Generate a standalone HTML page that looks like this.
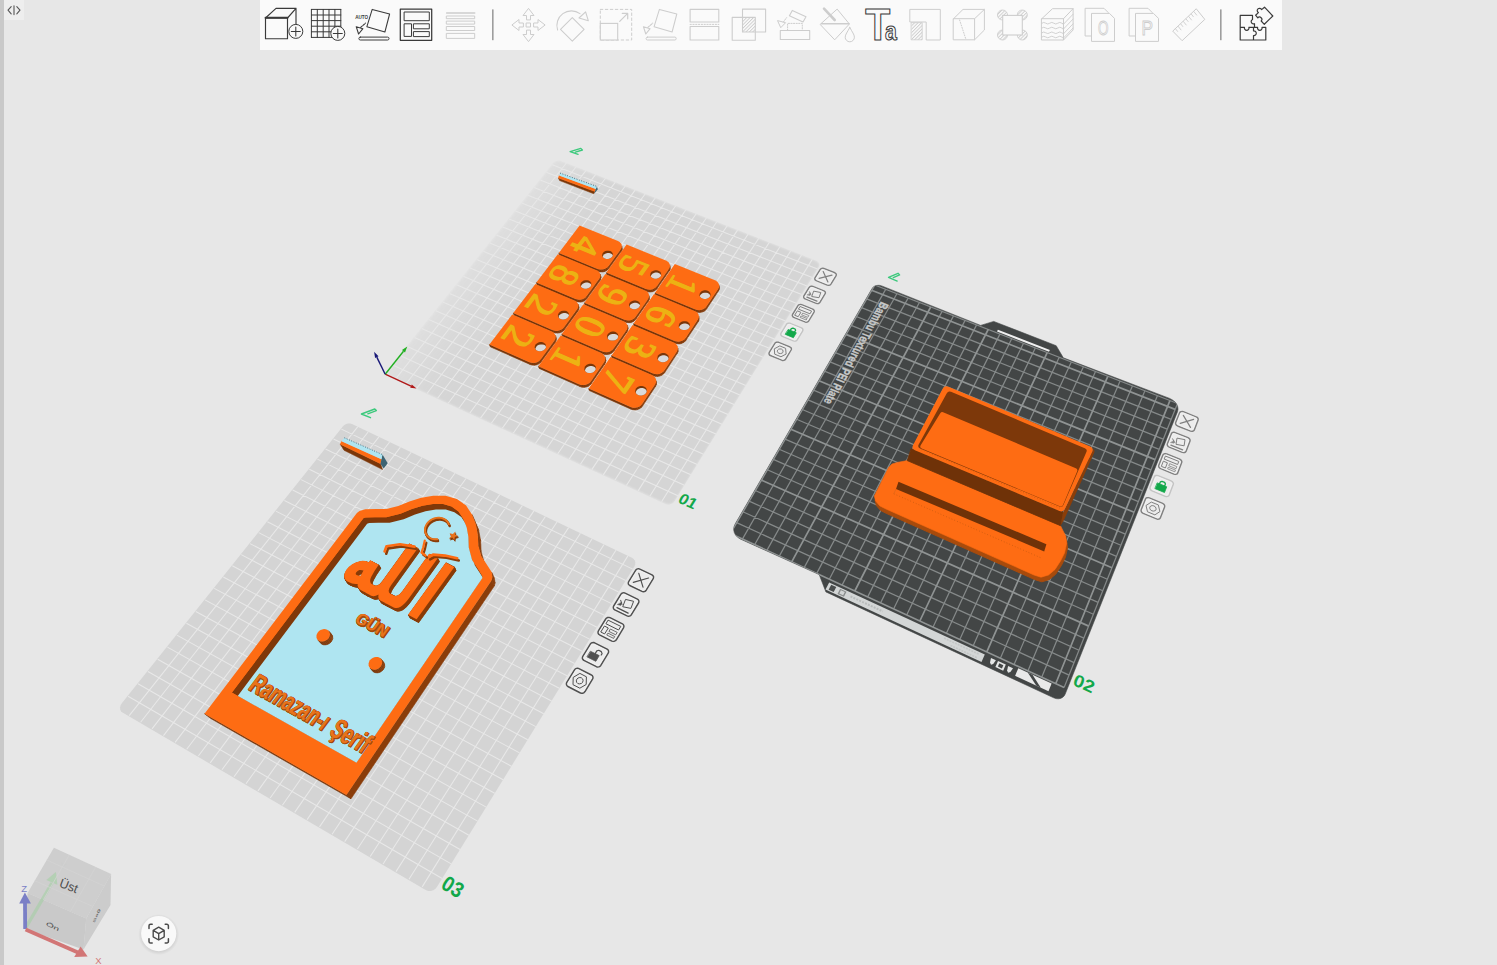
<!DOCTYPE html>
<html><head><meta charset="utf-8"><title>3D</title><style>html,body{margin:0;padding:0;background:#e7e7e7;overflow:hidden}svg{display:block}</style></head><body>
<svg width="1497" height="965" viewBox="0 0 1497 965">
<rect x="0" y="0" width="1497" height="965" fill="#e7e7e7"/>
<defs><linearGradient id="lg1" gradientUnits="userSpaceOnUse" x1="414.5" y1="337.5" x2="462.9" y2="376.1"><stop offset="0" stop-color="#707070"/><stop offset="0.5" stop-color="#c8c8c8"/><stop offset="1" stop-color="#fafafa"/></linearGradient><filter id="bl1" x="-5%" y="-5%" width="110%" height="110%"><feGaussianBlur stdDeviation="1.2"/></filter><mask id="mk1" maskUnits="userSpaceOnUse" x="0" y="0" width="1497" height="965"><polygon points="388.9,369.5 387.9,371.5 387.8,373.5 388.7,375.3 390.4,376.6 665.5,503.6 668.0,504.2 670.6,503.9 673.0,502.8 674.7,501.0 818.6,267.3 819.2,265.5 818.8,263.7 817.6,262.1 815.7,260.9 561.3,161.4 559.2,161.0 557.0,161.2 555.0,162.0 553.5,163.3" fill="url(#lg1)" filter="url(#bl1)"/></mask></defs>
<g mask="url(#mk1)">
<polygon points="388.0,369.7 387.1,371.3 386.8,372.9 387.2,374.5 388.1,375.8 389.5,376.8 665.1,504.1 667.1,504.7 669.3,504.7 671.3,504.1 673.1,503.0 674.4,501.5 818.8,266.9 819.4,265.5 819.3,264.0 818.7,262.6 817.5,261.4 816.0,260.5 561.1,160.9 559.5,160.5 557.7,160.5 556.0,160.9 554.5,161.7 553.3,162.7" fill="#d4d4d4" />
<path d="M395.6,378.9L566.4,163.0M392.6,364.9L677.9,495.7M406.0,383.8L576.1,166.8M400.0,355.6L684.4,485.2M416.5,388.6L585.9,170.6M407.3,346.5L690.8,474.8M427.0,393.5L595.7,174.4M414.5,337.5L697.2,464.4M437.6,398.3L605.5,178.2M421.7,328.5L703.5,454.2M448.2,403.3L615.4,182.1M428.7,319.6L709.7,444.1M458.9,408.2L625.3,186.0M435.8,310.8L715.9,434.1M469.7,413.2L635.3,189.9M442.7,302.1L722.0,424.2M480.5,418.1L645.3,193.8M449.6,293.4L728.0,414.4M491.3,423.2L655.4,197.7M456.5,284.8L734.0,404.6M502.3,428.2L665.5,201.7M463.3,276.3L739.9,395.0M513.2,433.3L675.7,205.7M470.0,267.9L745.8,385.4M524.3,438.4L685.9,209.7M476.7,259.6L751.7,376.0M535.4,443.5L696.2,213.7M483.3,251.3L757.4,366.6M546.5,448.7L706.5,217.7M489.8,243.1L763.1,357.3M557.8,453.8L716.8,221.8M496.3,235.0L768.8,348.1M569.1,459.1L727.2,225.8M502.7,226.9L774.4,339.0M580.4,464.3L737.7,229.9M509.1,218.9L780.0,330.0M591.8,469.6L748.2,234.0M515.4,211.0L785.5,321.0M603.3,474.9L758.8,238.2M521.7,203.1L791.0,312.1M614.8,480.2L769.4,242.3M527.9,195.3L796.4,303.3M626.4,485.5L780.1,246.5M534.1,187.6L801.7,294.6M638.1,490.9L790.8,250.7M540.2,179.9L807.0,286.0M649.8,496.3L801.6,254.9M546.3,172.3L812.3,277.4M661.6,501.8L812.4,259.1M552.3,164.8L817.5,269.0" stroke="#e8e8e8" stroke-width="1.05" fill="none"/>
</g>
<polygon points="122.0,703.0 120.7,705.1 120.1,707.3 120.2,709.4 121.0,711.3 122.5,712.6 426.1,890.2 428.3,891.0 430.8,891.0 433.3,890.3 435.5,888.7 437.2,886.6 634.5,566.3 635.2,564.4 635.3,562.5 634.8,560.6 633.6,559.0 631.9,557.8 352.0,424.0 350.2,423.4 348.1,423.4 346.1,424.0 344.3,425.0 342.8,426.4" fill="#d4d4d4" />
<path d="M129.2,715.6L357.8,426.7M128.1,696.3L442.2,878.5M140.6,722.2L368.3,431.8M138.0,683.8L451.2,863.9M152.0,728.9L378.9,436.9M147.9,671.5L460.1,849.5M163.5,735.6L389.6,442.0M157.7,659.2L468.9,835.2M175.1,742.4L400.4,447.1M167.4,647.1L477.6,821.1M186.7,749.2L411.2,452.3M176.9,635.1L486.2,807.1M198.4,756.0L422.0,457.5M186.4,623.3L494.7,793.3M210.2,762.9L432.9,462.7M195.8,611.5L503.1,779.7M222.0,769.8L443.9,467.9M205.0,599.9L511.4,766.2M234.0,776.8L454.9,473.2M214.2,588.4L519.6,752.9M246.0,783.8L466.0,478.5M223.3,577.0L527.7,739.7M258.0,790.9L477.2,483.8M232.3,565.8L535.8,726.6M270.2,798.0L488.4,489.2M241.2,554.6L543.7,713.7M282.4,805.2L499.7,494.6M250.0,543.6L551.6,701.0M294.7,812.4L511.0,500.0M258.7,532.6L559.3,688.3M307.1,819.6L522.4,505.5M267.4,521.8L567.0,675.8M319.5,826.9L533.9,510.9M275.9,511.1L574.6,663.5M332.1,834.2L545.4,516.5M284.4,500.5L582.2,651.2M344.7,841.6L557.0,522.0M292.7,490.0L589.6,639.1M357.4,849.0L568.6,527.6M301.1,479.6L597.0,627.2M370.2,856.5L580.4,533.2M309.3,469.3L604.3,615.3M383.1,864.0L592.1,538.8M317.4,459.1L611.5,603.6M396.0,871.6L604.0,544.5M325.5,449.0L618.6,592.0M409.0,879.2L615.9,550.2M333.5,439.0L625.7,580.5M422.2,886.9L627.9,555.9M341.4,429.1L632.7,569.1" stroke="#e8e8e8" stroke-width="1.05" fill="none"/>
<polygon points="735.1,524.1 734.0,526.8 733.7,529.7 734.3,532.5 735.6,535.1 737.7,537.3 740.3,539.0 819.2,574.6 825.9,591.9 1053.7,697.8 1056.0,698.6 1058.3,698.8 1060.6,698.4 1062.5,697.4 1064.1,696.0 1065.2,694.1 1177.5,411.7 1178.0,409.2 1177.7,406.7 1176.6,404.1 1174.8,401.8 1172.4,399.9 1169.6,398.4 1063.3,357.8 1056.2,345.7 993.7,321.4 980.6,325.4 881.7,285.9 879.9,285.4 878.0,285.3 876.1,285.6 874.5,286.2 873.1,287.2 872.1,288.5" fill="#434646" stroke="#434646" stroke-width="0.6" stroke-linejoin="round" />
<clipPath id="dkclip"><polygon points="735.1,524.1 734.0,526.8 733.7,529.7 734.3,532.5 735.6,535.1 737.7,537.3 740.3,539.0 819.2,574.6 825.9,591.9 1053.7,697.8 1056.0,698.6 1058.3,698.8 1060.6,698.4 1062.5,697.4 1064.1,696.0 1065.2,694.1 1177.5,411.7 1178.0,409.2 1177.7,406.7 1176.6,404.1 1174.8,401.8 1172.4,399.9 1169.6,398.4 1063.3,357.8 1056.2,345.7 993.7,321.4 980.6,325.4 881.7,285.9 879.9,285.4 878.0,285.3 876.1,285.6 874.5,286.2 873.1,287.2 872.1,288.5"/></clipPath>
<polygon points="997.0,331.5 1049.0,351.8 1049.9,350.0 997.9,329.7" fill="#f0f0f0" />
<g clip-path="url(#dkclip)"><path d="M742.4,539.1L885.7,289.4M736.6,522.6L1069.1,675.1M754.6,544.7L896.9,293.7M742.9,511.8L1074.1,662.6M766.9,550.4L908.1,298.1M749.1,501.1L1079.0,650.3M779.3,556.1L919.4,302.5M755.2,490.5L1083.9,638.1M804.2,567.6L942.1,311.4M767.3,469.7L1093.4,614.2M816.7,573.4L953.5,315.9M773.3,459.4L1098.1,602.4M829.3,579.2L965.1,320.4M779.2,449.2L1102.8,590.7M842.1,585.1L976.6,324.9M785.1,439.1L1107.4,579.2M867.7,596.9L999.9,334.1M796.6,419.3L1116.5,556.4M880.6,602.9L1011.7,338.7M802.3,409.5L1120.9,545.2M893.6,608.9L1023.5,343.3M807.9,399.8L1125.4,534.2M906.7,614.9L1035.3,347.9M813.5,390.2L1129.7,523.2M933.1,627.1L1059.2,357.3M824.5,371.2L1138.4,501.6M946.4,633.3L1071.3,362.0M830.0,361.9L1142.6,490.9M959.8,639.4L1083.4,366.7M835.3,352.7L1146.8,480.4M973.2,645.7L1095.5,371.5M840.7,343.5L1151.0,469.9M1000.4,658.2L1120.1,381.1M851.2,325.4L1159.2,449.4M1014.1,664.5L1132.4,385.9M856.3,316.5L1163.2,439.2M1027.9,670.9L1144.9,390.8M861.5,307.6L1167.2,429.2M1041.7,677.3L1157.4,395.7M866.6,298.9L1171.2,419.3M1064.1,687.6L1177.5,403.5M874.6,285.0L1177.5,403.5" stroke="#858989" stroke-width="1.25" fill="none"/>
<path d="M730.3,533.5L874.6,285.0M730.3,533.5L1064.1,687.6M791.7,561.8L930.7,307.0M761.3,480.0L1088.7,626.1M854.8,591.0L988.2,329.5M790.9,429.2L1111.9,567.7M919.8,621.0L1047.2,352.6M819.0,380.7L1134.1,512.3M986.8,651.9L1107.8,376.3M845.9,334.4L1155.1,459.6M1055.7,683.7L1169.9,400.6M871.6,290.2L1175.1,409.4" stroke="#8f9393" stroke-width="1.7" fill="none"/></g>
<polygon points="829.2,582.5 984.8,654.4 981.5,662.0 825.5,589.6" fill="#d3d6d6" />
<polygon points="831.2,584.7 836.3,587.0 833.7,592.1 828.6,589.7" fill="#4a4d4d" />
<polygon points="840.1,588.8 846.5,591.7 843.9,596.8 837.5,593.9" fill="#8a8d8d" />
<polygon points="840.9,590.3 844.8,592.1 843.1,595.3 839.3,593.5" fill="#d3d6d6" />
<path d="M850.5,596.4L882.8,611.4" stroke="#b9bcbc" stroke-width="2" stroke-dasharray="2 1.2" fill="none"/>
<path d="M944.1,638.1L979.2,654.3M950.5,645.4L977.5,658.0" stroke="#c3c6c6" stroke-width="1.6" stroke-dasharray="2 1" fill="none"/>
<polygon points="991.0,658.0 995.9,660.3 993.2,664.1 991.0,664.8 990.0,662.6" fill="#e4e6e6" />
<polygon points="1008.1,665.9 1013.0,668.2 1010.4,672.0 1008.1,672.8 1007.1,670.5" fill="#e4e6e6" />
<polygon points="998.0,661.0 1005.8,664.6 1003.2,670.8 995.4,667.1" fill="#e4e6e6" />
<polygon points="999.3,663.3 1003.3,665.2 1001.9,668.4 997.9,666.6" fill="#434646" />
<polygon points="1018.3,668.2 1051.6,683.6 1048.5,691.3 1015.1,675.8" fill="#e9e9e9" />
<polygon points="1027.9,672.7 1032.5,674.8 1040.8,687.8 1036.2,685.6" fill="#434646" />
<text transform="matrix(-0.5011,0.8749,-1.1286,-0.4452,880.91,301.33)" font-family="'Liberation Sans',sans-serif" font-size="10.4" font-weight="bold" fill="#c6c8c8" text-anchor="start" textLength="115" lengthAdjust="spacingAndGlyphs" stroke="#c6c8c8" stroke-width="0.3">Bambu Textured PEI Plate</text>
<line x1="385.2" y1="374.2" x2="411.0" y2="386.1" stroke="#b01818" stroke-width="1.4"/>
<polygon points="416.5,388.6 410.2,387.8 411.8,384.4" fill="#b01818" />
<line x1="385.2" y1="374.2" x2="403.5" y2="351.2" stroke="#22b022" stroke-width="1.4"/>
<polygon points="407.3,346.5 405.0,352.4 402.0,350.0" fill="#22b022" />
<line x1="385.2" y1="374.2" x2="376.8" y2="357.1" stroke="#181878" stroke-width="1.4"/>
<polygon points="374.1,351.7 378.5,356.3 375.1,357.9" fill="#181878" />
<polygon points="340.2,444.2 380.5,463.7 382.5,469.6 344.0,450.3" fill="#7a3608" stroke="#7a3608" stroke-width="0.5" stroke-linejoin="round" />
<polygon points="341.5,441.2 381.4,459.2 380.5,463.7 340.2,444.2" fill="#fe6c13" stroke="#fe6c13" stroke-width="0.4" stroke-linejoin="round" />
<polygon points="382.5,454.6 387.7,463.2 383.7,468.6 380.5,463.7 381.4,459.2" fill="#3d6473" />
<polygon points="344.4,437.8 382.5,454.6 381.4,459.2 341.5,441.2" fill="#afe5f1" />
<line x1="344.4" y1="437.8" x2="382.5" y2="454.6" stroke="#35586a" stroke-width="0.9" stroke-dasharray="0.9 1.6"/>
<polygon points="558.4,178.0 594.9,191.6 593.8,193.8 559.6,180.6" fill="#7a3608" stroke="#7a3608" stroke-width="0.5" stroke-linejoin="round" />
<polygon points="559.1,175.5 595.8,188.9 594.9,191.6 558.4,178.0" fill="#fe6c13" stroke="#fe6c13" stroke-width="0.4" stroke-linejoin="round" />
<polygon points="596.8,186.4 597.9,189.3 594.4,193.6 594.9,191.6 595.8,188.9" fill="#3d6473" />
<polygon points="560.1,173.1 596.8,186.4 595.8,188.9 559.1,175.5" fill="#afe5f1" />
<line x1="560.1" y1="173.1" x2="596.8" y2="186.4" stroke="#35586a" stroke-width="0.9" stroke-dasharray="0.9 1.6"/>
<polygon points="559.4,255.3 598.1,271.3 597.6,269.0 558.8,252.9" fill="#783509" stroke="#783509" stroke-width="0.6" stroke-linejoin="round" />
<polygon points="598.1,271.3 599.9,271.9 599.5,269.5 597.6,269.0" fill="#7a3609" stroke="#7a3609" stroke-width="0.6" stroke-linejoin="round" />
<polygon points="599.9,271.9 602.0,272.0 601.5,269.6 599.5,269.5" fill="#7d3709" stroke="#7d3709" stroke-width="0.6" stroke-linejoin="round" />
<polygon points="602.0,272.0 604.0,271.7 603.6,269.3 601.5,269.6" fill="#803809" stroke="#803809" stroke-width="0.6" stroke-linejoin="round" />
<polygon points="604.0,271.7 605.9,271.0 605.5,268.6 603.6,269.3" fill="#823a0a" stroke="#823a0a" stroke-width="0.6" stroke-linejoin="round" />
<polygon points="605.9,271.0 607.5,269.9 607.1,267.6 605.5,268.6" fill="#853b0a" stroke="#853b0a" stroke-width="0.6" stroke-linejoin="round" />
<polygon points="607.5,269.9 608.8,268.6 608.4,266.3 607.1,267.6" fill="#883c0a" stroke="#883c0a" stroke-width="0.6" stroke-linejoin="round" />
<polygon points="608.8,268.6 621.2,251.5 620.8,249.2 608.4,266.3" fill="#8a3d0a" stroke="#8a3d0a" stroke-width="0.6" stroke-linejoin="round" />
<polygon points="621.2,251.5 622.0,250.1 621.6,247.7 620.8,249.2" fill="#8a3d0a" stroke="#8a3d0a" stroke-width="0.6" stroke-linejoin="round" />
<polygon points="622.0,250.1 622.2,248.5 621.8,246.1 621.6,247.7" fill="#8a3d0a" stroke="#8a3d0a" stroke-width="0.6" stroke-linejoin="round" />
<polygon points="558.8,252.9 597.6,269.0 599.5,269.5 601.5,269.6 603.6,269.3 605.5,268.6 607.1,267.6 608.4,266.3 620.8,249.2 621.6,247.7 621.8,246.1 621.6,244.6 620.8,243.2 619.6,242.0 618.0,241.1 579.6,225.5" fill="#fe6c13" />
<polygon points="612.2,256.7 612.8,255.4 612.9,254.1 612.5,252.9 611.6,251.8 610.3,251.1 608.7,250.7 607.0,250.7 605.4,251.1 604.0,251.8 602.9,252.9 602.3,254.1 602.2,255.5 602.6,256.7 603.5,257.8 604.8,258.5 606.4,259.0 608.1,259.0 609.7,258.5 611.1,257.8" fill="#7a3608" />
<clipPath id="h96_182"><polygon points="612.2,256.7 612.8,255.4 612.9,254.1 612.5,252.9 611.6,251.8 610.3,251.1 608.7,250.7 607.0,250.7 605.4,251.1 604.0,251.8 602.9,252.9 602.3,254.1 602.2,255.5 602.6,256.7 603.5,257.8 604.8,258.5 606.4,259.0 608.1,259.0 609.7,258.5 611.1,257.8"/></clipPath>
<polygon points="612.6,259.1 613.2,257.8 613.3,256.5 612.9,255.3 612.0,254.2 610.7,253.4 609.2,253.0 607.5,253.0 605.8,253.4 604.4,254.2 603.4,255.3 602.7,256.5 602.6,257.8 603.1,259.1 604.0,260.1 605.3,260.9 606.8,261.3 608.5,261.3 610.1,260.9 611.6,260.1" fill="#dadada" clip-path="url(#h96_182)"/>
<text transform="matrix(-0.6184,0.8200,-1.0170,-0.4159,574.15,241.13)" font-family="'Liberation Serif',serif" font-size="35" font-weight="normal" fill="#ecb213" text-anchor="middle" stroke="#ecb213" stroke-width="1.15">4</text>
<polygon points="606.8,274.9 646.4,291.3 646.0,289.0 606.3,272.6" fill="#783509" stroke="#783509" stroke-width="0.6" stroke-linejoin="round" />
<polygon points="646.4,291.3 648.3,291.9 647.9,289.5 646.0,289.0" fill="#7a3609" stroke="#7a3609" stroke-width="0.6" stroke-linejoin="round" />
<polygon points="648.3,291.9 650.3,292.0 650.0,289.7 647.9,289.5" fill="#7d3709" stroke="#7d3709" stroke-width="0.6" stroke-linejoin="round" />
<polygon points="650.3,292.0 652.4,291.7 652.1,289.4 650.0,289.7" fill="#803809" stroke="#803809" stroke-width="0.6" stroke-linejoin="round" />
<polygon points="652.4,291.7 654.3,291.0 654.0,288.6 652.1,289.4" fill="#823a0a" stroke="#823a0a" stroke-width="0.6" stroke-linejoin="round" />
<polygon points="654.3,291.0 655.9,289.9 655.6,287.6 654.0,288.6" fill="#853b0a" stroke="#853b0a" stroke-width="0.6" stroke-linejoin="round" />
<polygon points="655.9,289.9 657.1,288.6 656.8,286.2 655.6,287.6" fill="#883c0a" stroke="#883c0a" stroke-width="0.6" stroke-linejoin="round" />
<polygon points="657.1,288.6 669.2,271.1 669.0,268.7 656.8,286.2" fill="#8a3d0a" stroke="#8a3d0a" stroke-width="0.6" stroke-linejoin="round" />
<polygon points="669.2,271.1 670.0,269.6 669.7,267.2 669.0,268.7" fill="#8a3d0a" stroke="#8a3d0a" stroke-width="0.6" stroke-linejoin="round" />
<polygon points="670.0,269.6 670.2,268.0 670.0,265.6 669.7,267.2" fill="#8a3d0a" stroke="#8a3d0a" stroke-width="0.6" stroke-linejoin="round" />
<polygon points="606.3,272.6 646.0,289.0 647.9,289.5 650.0,289.7 652.1,289.4 654.0,288.6 655.6,287.6 656.8,286.2 669.0,268.7 669.7,267.2 670.0,265.6 669.6,264.0 668.8,262.6 667.6,261.4 665.9,260.5 626.6,244.6" fill="#fe6c13" />
<polygon points="660.5,276.4 661.1,275.2 661.1,273.8 660.7,272.5 659.7,271.5 658.4,270.7 656.8,270.3 655.1,270.3 653.5,270.7 652.0,271.5 651.0,272.6 650.4,273.8 650.3,275.2 650.8,276.5 651.7,277.5 653.1,278.3 654.7,278.7 656.4,278.7 658.0,278.3 659.4,277.5" fill="#7a3608" />
<clipPath id="h143_182"><polygon points="660.5,276.4 661.1,275.2 661.1,273.8 660.7,272.5 659.7,271.5 658.4,270.7 656.8,270.3 655.1,270.3 653.5,270.7 652.0,271.5 651.0,272.6 650.4,273.8 650.3,275.2 650.8,276.5 651.7,277.5 653.1,278.3 654.7,278.7 656.4,278.7 658.0,278.3 659.4,277.5"/></clipPath>
<polygon points="660.8,278.8 661.4,277.5 661.4,276.2 661.0,274.9 660.0,273.8 658.7,273.0 657.1,272.6 655.4,272.6 653.8,273.0 652.4,273.8 651.3,274.9 650.7,276.2 650.6,277.5 651.1,278.8 652.0,279.9 653.4,280.7 655.0,281.1 656.7,281.1 658.3,280.7 659.7,279.9" fill="#dadada" clip-path="url(#h143_182)"/>
<text transform="matrix(-0.6045,0.8378,-1.0402,-0.4254,621.56,260.52)" font-family="'Liberation Serif',serif" font-size="35" font-weight="normal" fill="#ecb213" text-anchor="middle" stroke="#ecb213" stroke-width="1.15">5</text>
<polygon points="655.3,295.0 695.8,311.8 695.6,309.5 655.0,292.7" fill="#783509" stroke="#783509" stroke-width="0.6" stroke-linejoin="round" />
<polygon points="695.8,311.8 697.7,312.3 697.5,310.0 695.6,309.5" fill="#7a3609" stroke="#7a3609" stroke-width="0.6" stroke-linejoin="round" />
<polygon points="697.7,312.3 699.8,312.4 699.6,310.2 697.5,310.0" fill="#7d3709" stroke="#7d3709" stroke-width="0.6" stroke-linejoin="round" />
<polygon points="699.8,312.4 701.9,312.1 701.7,309.8 699.6,310.2" fill="#803809" stroke="#803809" stroke-width="0.6" stroke-linejoin="round" />
<polygon points="701.9,312.1 703.8,311.4 703.6,309.1 701.7,309.8" fill="#823a0a" stroke="#823a0a" stroke-width="0.6" stroke-linejoin="round" />
<polygon points="703.8,311.4 705.4,310.3 705.2,308.0 703.6,309.1" fill="#853b0a" stroke="#853b0a" stroke-width="0.6" stroke-linejoin="round" />
<polygon points="705.4,310.3 706.6,308.9 706.4,306.6 705.2,308.0" fill="#883c0a" stroke="#883c0a" stroke-width="0.6" stroke-linejoin="round" />
<polygon points="706.6,308.9 718.4,291.1 718.3,288.8 706.4,306.6" fill="#8a3d0a" stroke="#8a3d0a" stroke-width="0.6" stroke-linejoin="round" />
<polygon points="718.4,291.1 719.1,289.5 719.0,287.2 718.3,288.8" fill="#8a3d0a" stroke="#8a3d0a" stroke-width="0.6" stroke-linejoin="round" />
<polygon points="719.1,289.5 719.3,287.9 719.2,285.6 719.0,287.2" fill="#8a3d0a" stroke="#8a3d0a" stroke-width="0.6" stroke-linejoin="round" />
<polygon points="655.0,292.7 695.6,309.5 697.5,310.0 699.6,310.2 701.7,309.8 703.6,309.1 705.2,308.0 706.4,306.6 718.3,288.8 719.0,287.2 719.2,285.6 718.8,284.0 718.0,282.5 716.6,281.3 715.0,280.3 674.8,264.1" fill="#fe6c13" />
<polygon points="709.9,296.6 710.5,295.3 710.5,294.0 710.0,292.7 709.0,291.6 707.6,290.7 706.0,290.3 704.3,290.3 702.6,290.8 701.2,291.6 700.2,292.7 699.6,294.0 699.5,295.3 700.0,296.6 701.0,297.8 702.4,298.6 704.0,299.0 705.8,299.0 707.4,298.6 708.8,297.8" fill="#7a3608" />
<clipPath id="h189_182"><polygon points="709.9,296.6 710.5,295.3 710.5,294.0 710.0,292.7 709.0,291.6 707.6,290.7 706.0,290.3 704.3,290.3 702.6,290.8 701.2,291.6 700.2,292.7 699.6,294.0 699.5,295.3 700.0,296.6 701.0,297.8 702.4,298.6 704.0,299.0 705.8,299.0 707.4,298.6 708.8,297.8"/></clipPath>
<polygon points="710.0,299.0 710.6,297.7 710.6,296.3 710.1,295.0 709.2,293.9 707.8,293.1 706.2,292.7 704.4,292.7 702.8,293.1 701.4,293.9 700.3,295.0 699.8,296.3 699.7,297.7 700.2,299.0 701.2,300.1 702.6,300.9 704.2,301.3 705.9,301.3 707.6,300.9 709.0,300.1" fill="#dadada" clip-path="url(#h189_182)"/>
<text transform="matrix(-0.5898,0.8563,-1.0642,-0.4352,670.05,280.35)" font-family="'Liberation Serif',serif" font-size="35" font-weight="normal" fill="#ecb213" text-anchor="middle" stroke="#ecb213" stroke-width="1.15">1</text>
<polygon points="537.0,284.9 576.1,301.4 575.6,299.1 536.4,282.5" fill="#783509" stroke="#783509" stroke-width="0.6" stroke-linejoin="round" />
<polygon points="576.1,301.4 578.0,301.9 577.5,299.6 575.6,299.1" fill="#7a3609" stroke="#7a3609" stroke-width="0.6" stroke-linejoin="round" />
<polygon points="578.0,301.9 580.1,302.1 579.6,299.8 577.5,299.6" fill="#7d3709" stroke="#7d3709" stroke-width="0.6" stroke-linejoin="round" />
<polygon points="580.1,302.1 582.1,301.8 581.6,299.5 579.6,299.8" fill="#803809" stroke="#803809" stroke-width="0.6" stroke-linejoin="round" />
<polygon points="582.1,301.8 584.1,301.1 583.6,298.7 581.6,299.5" fill="#823a0a" stroke="#823a0a" stroke-width="0.6" stroke-linejoin="round" />
<polygon points="584.1,301.1 585.7,300.0 585.2,297.7 583.6,298.7" fill="#853b0a" stroke="#853b0a" stroke-width="0.6" stroke-linejoin="round" />
<polygon points="585.7,300.0 587.0,298.6 586.5,296.3 585.2,297.7" fill="#883c0a" stroke="#883c0a" stroke-width="0.6" stroke-linejoin="round" />
<polygon points="587.0,298.6 599.8,281.0 599.4,278.6 586.5,296.3" fill="#8a3d0a" stroke="#8a3d0a" stroke-width="0.6" stroke-linejoin="round" />
<polygon points="599.8,281.0 600.6,279.5 600.2,277.1 599.4,278.6" fill="#8a3d0a" stroke="#8a3d0a" stroke-width="0.6" stroke-linejoin="round" />
<polygon points="600.6,279.5 600.9,277.8 600.5,275.5 600.2,277.1" fill="#8a3d0a" stroke="#8a3d0a" stroke-width="0.6" stroke-linejoin="round" />
<polygon points="600.9,277.8 600.7,276.3 600.2,273.9 600.5,275.5" fill="#8a3d0a" stroke="#8a3d0a" stroke-width="0.6" stroke-linejoin="round" />
<polygon points="536.4,282.5 575.6,299.1 577.5,299.6 579.6,299.8 581.6,299.5 583.6,298.7 585.2,297.7 586.5,296.3 599.4,278.6 600.2,277.1 600.5,275.5 600.2,273.9 599.5,272.5 598.2,271.2 596.6,270.3 557.8,254.3" fill="#fe6c13" />
<polygon points="590.6,286.4 591.2,285.1 591.3,283.8 590.9,282.5 590.0,281.4 588.7,280.6 587.1,280.2 585.4,280.2 583.7,280.6 582.3,281.4 581.2,282.5 580.5,283.8 580.4,285.1 580.8,286.4 581.7,287.5 583.0,288.3 584.6,288.8 586.4,288.8 588.0,288.3 589.5,287.5" fill="#7a3608" />
<clipPath id="h96_147"><polygon points="590.6,286.4 591.2,285.1 591.3,283.8 590.9,282.5 590.0,281.4 588.7,280.6 587.1,280.2 585.4,280.2 583.7,280.6 582.3,281.4 581.2,282.5 580.5,283.8 580.4,285.1 580.8,286.4 581.7,287.5 583.0,288.3 584.6,288.8 586.4,288.8 588.0,288.3 589.5,287.5"/></clipPath>
<polygon points="591.1,288.8 591.7,287.5 591.8,286.1 591.4,284.8 590.5,283.7 589.2,282.9 587.6,282.5 585.9,282.5 584.2,282.9 582.8,283.7 581.7,284.8 581.0,286.1 580.9,287.5 581.3,288.8 582.2,289.9 583.5,290.7 585.1,291.1 586.8,291.1 588.5,290.7 590.0,289.9" fill="#dadada" clip-path="url(#h96_147)"/>
<text transform="matrix(-0.6377,0.8456,-1.0273,-0.4296,552.12,270.35)" font-family="'Liberation Serif',serif" font-size="35" font-weight="normal" fill="#ecb213" text-anchor="middle" stroke="#ecb213" stroke-width="1.15">8</text>
<polygon points="584.9,305.1 624.9,322.0 624.5,319.8 584.4,302.8" fill="#783509" stroke="#783509" stroke-width="0.6" stroke-linejoin="round" />
<polygon points="624.9,322.0 626.9,322.6 626.5,320.3 624.5,319.8" fill="#7a3609" stroke="#7a3609" stroke-width="0.6" stroke-linejoin="round" />
<polygon points="626.9,322.6 629.0,322.7 628.6,320.5 626.5,320.3" fill="#7d3709" stroke="#7d3709" stroke-width="0.6" stroke-linejoin="round" />
<polygon points="629.0,322.7 631.0,322.4 630.7,320.2 628.6,320.5" fill="#803809" stroke="#803809" stroke-width="0.6" stroke-linejoin="round" />
<polygon points="631.0,322.4 633.0,321.7 632.6,319.4 630.7,320.2" fill="#823a0a" stroke="#823a0a" stroke-width="0.6" stroke-linejoin="round" />
<polygon points="633.0,321.7 634.6,320.6 634.3,318.3 632.6,319.4" fill="#853b0a" stroke="#853b0a" stroke-width="0.6" stroke-linejoin="round" />
<polygon points="634.6,320.6 635.9,319.2 635.5,316.9 634.3,318.3" fill="#883c0a" stroke="#883c0a" stroke-width="0.6" stroke-linejoin="round" />
<polygon points="635.9,319.2 648.4,301.2 648.1,298.9 635.5,316.9" fill="#8a3d0a" stroke="#8a3d0a" stroke-width="0.6" stroke-linejoin="round" />
<polygon points="648.4,301.2 649.2,299.6 648.8,297.3 648.1,298.9" fill="#8a3d0a" stroke="#8a3d0a" stroke-width="0.6" stroke-linejoin="round" />
<polygon points="649.2,299.6 649.4,298.0 649.1,295.7 648.8,297.3" fill="#8a3d0a" stroke="#8a3d0a" stroke-width="0.6" stroke-linejoin="round" />
<polygon points="584.4,302.8 624.5,319.8 626.5,320.3 628.6,320.5 630.7,320.2 632.6,319.4 634.3,318.3 635.5,316.9 648.1,298.9 648.8,297.3 649.1,295.7 648.8,294.0 648.0,292.5 646.7,291.3 645.1,290.4 605.4,273.9" fill="#fe6c13" />
<polygon points="639.4,306.8 640.0,305.5 640.1,304.1 639.6,302.8 638.7,301.7 637.3,300.9 635.7,300.5 634.0,300.5 632.3,300.9 630.8,301.7 629.8,302.8 629.1,304.1 629.0,305.5 629.5,306.8 630.4,308.0 631.8,308.8 633.4,309.2 635.1,309.2 636.8,308.8 638.3,308.0" fill="#7a3608" />
<clipPath id="h143_147"><polygon points="639.4,306.8 640.0,305.5 640.1,304.1 639.6,302.8 638.7,301.7 637.3,300.9 635.7,300.5 634.0,300.5 632.3,300.9 630.8,301.7 629.8,302.8 629.1,304.1 629.0,305.5 629.5,306.8 630.4,308.0 631.8,308.8 633.4,309.2 635.1,309.2 636.8,308.8 638.3,308.0"/></clipPath>
<polygon points="639.7,309.1 640.3,307.8 640.4,306.4 640.0,305.1 639.0,304.0 637.7,303.2 636.1,302.8 634.3,302.8 632.7,303.2 631.2,304.0 630.1,305.1 629.5,306.4 629.4,307.8 629.9,309.1 630.8,310.3 632.2,311.1 633.8,311.5 635.5,311.5 637.2,311.1 638.6,310.3" fill="#dadada" clip-path="url(#h143_147)"/>
<text transform="matrix(-0.6237,0.8644,-1.0512,-0.4396,600.01,290.37)" font-family="'Liberation Serif',serif" font-size="35" font-weight="normal" fill="#ecb213" text-anchor="middle" stroke="#ecb213" stroke-width="1.15">9</text>
<polygon points="633.9,325.9 674.9,343.2 674.6,340.9 633.6,323.6" fill="#783509" stroke="#783509" stroke-width="0.6" stroke-linejoin="round" />
<polygon points="674.9,343.2 676.9,343.8 676.6,341.5 674.6,340.9" fill="#7a3609" stroke="#7a3609" stroke-width="0.6" stroke-linejoin="round" />
<polygon points="676.9,343.8 679.0,343.9 678.7,341.7 676.6,341.5" fill="#7d3709" stroke="#7d3709" stroke-width="0.6" stroke-linejoin="round" />
<polygon points="679.0,343.9 681.1,343.6 680.8,341.3 678.7,341.7" fill="#803809" stroke="#803809" stroke-width="0.6" stroke-linejoin="round" />
<polygon points="681.1,343.6 683.0,342.8 682.8,340.6 680.8,341.3" fill="#823a0a" stroke="#823a0a" stroke-width="0.6" stroke-linejoin="round" />
<polygon points="683.0,342.8 684.7,341.7 684.4,339.5 682.8,340.6" fill="#853b0a" stroke="#853b0a" stroke-width="0.6" stroke-linejoin="round" />
<polygon points="684.7,341.7 685.9,340.3 685.7,338.0 684.4,339.5" fill="#883c0a" stroke="#883c0a" stroke-width="0.6" stroke-linejoin="round" />
<polygon points="685.9,340.3 698.1,321.9 697.9,319.6 685.7,338.0" fill="#8a3d0a" stroke="#8a3d0a" stroke-width="0.6" stroke-linejoin="round" />
<polygon points="698.1,321.9 698.8,320.3 698.6,318.0 697.9,319.6" fill="#8a3d0a" stroke="#8a3d0a" stroke-width="0.6" stroke-linejoin="round" />
<polygon points="698.8,320.3 699.1,318.6 698.9,316.3 698.6,318.0" fill="#8a3d0a" stroke="#8a3d0a" stroke-width="0.6" stroke-linejoin="round" />
<polygon points="633.6,323.6 674.6,340.9 676.6,341.5 678.7,341.7 680.8,341.3 682.8,340.6 684.4,339.5 685.7,338.0 697.9,319.6 698.6,318.0 698.9,316.3 698.5,314.6 697.7,313.1 696.3,311.8 694.6,310.9 654.0,294.1" fill="#fe6c13" />
<polygon points="689.3,327.7 689.9,326.4 689.9,324.9 689.4,323.6 688.4,322.5 687.1,321.6 685.4,321.2 683.7,321.2 682.0,321.6 680.5,322.5 679.5,323.6 678.9,324.9 678.8,326.4 679.3,327.7 680.3,328.9 681.7,329.7 683.3,330.1 685.1,330.1 686.8,329.7 688.2,328.9" fill="#7a3608" />
<clipPath id="h189_147"><polygon points="689.3,327.7 689.9,326.4 689.9,324.9 689.4,323.6 688.4,322.5 687.1,321.6 685.4,321.2 683.7,321.2 682.0,321.6 680.5,322.5 679.5,323.6 678.9,324.9 678.8,326.4 679.3,327.7 680.3,328.9 681.7,329.7 683.3,330.1 685.1,330.1 686.8,329.7 688.2,328.9"/></clipPath>
<polygon points="689.5,330.0 690.1,328.6 690.2,327.2 689.7,325.9 688.7,324.7 687.3,323.9 685.6,323.5 683.9,323.5 682.2,323.9 680.8,324.7 679.7,325.9 679.1,327.2 679.1,328.6 679.6,330.0 680.5,331.1 681.9,332.0 683.6,332.4 685.3,332.4 687.0,332.0 688.5,331.1" fill="#dadada" clip-path="url(#h189_147)"/>
<text transform="matrix(-0.6087,0.8837,-1.0758,-0.4499,649.02,310.87)" font-family="'Liberation Serif',serif" font-size="35" font-weight="normal" fill="#ecb213" text-anchor="middle" stroke="#ecb213" stroke-width="1.15">6</text>
<polygon points="514.0,315.3 553.5,332.4 552.9,330.2 513.3,313.0" fill="#783509" stroke="#783509" stroke-width="0.6" stroke-linejoin="round" />
<polygon points="553.5,332.4 555.4,333.0 554.8,330.7 552.9,330.2" fill="#7a3609" stroke="#7a3609" stroke-width="0.6" stroke-linejoin="round" />
<polygon points="555.4,333.0 557.5,333.1 556.9,330.9 554.8,330.7" fill="#7d3709" stroke="#7d3709" stroke-width="0.6" stroke-linejoin="round" />
<polygon points="557.5,333.1 559.6,332.8 559.0,330.6 556.9,330.9" fill="#803809" stroke="#803809" stroke-width="0.6" stroke-linejoin="round" />
<polygon points="559.6,332.8 561.6,332.1 561.0,329.8 559.0,330.6" fill="#823a0a" stroke="#823a0a" stroke-width="0.6" stroke-linejoin="round" />
<polygon points="561.6,332.1 563.3,331.0 562.7,328.7 561.0,329.8" fill="#853b0a" stroke="#853b0a" stroke-width="0.6" stroke-linejoin="round" />
<polygon points="563.3,331.0 564.6,329.6 564.0,327.3 562.7,328.7" fill="#883c0a" stroke="#883c0a" stroke-width="0.6" stroke-linejoin="round" />
<polygon points="564.6,329.6 577.8,311.4 577.3,309.1 564.0,327.3" fill="#8a3d0a" stroke="#8a3d0a" stroke-width="0.6" stroke-linejoin="round" />
<polygon points="577.8,311.4 578.6,309.8 578.1,307.5 577.3,309.1" fill="#8a3d0a" stroke="#8a3d0a" stroke-width="0.6" stroke-linejoin="round" />
<polygon points="578.6,309.8 578.9,308.1 578.4,305.8 578.1,307.5" fill="#8a3d0a" stroke="#8a3d0a" stroke-width="0.6" stroke-linejoin="round" />
<polygon points="578.9,308.1 578.7,306.5 578.2,304.2 578.4,305.8" fill="#8a3d0a" stroke="#8a3d0a" stroke-width="0.6" stroke-linejoin="round" />
<polygon points="513.3,313.0 552.9,330.2 554.8,330.7 556.9,330.9 559.0,330.6 561.0,329.8 562.7,328.7 564.0,327.3 577.3,309.1 578.1,307.5 578.4,305.8 578.2,304.2 577.4,302.7 576.2,301.4 574.6,300.5 535.4,283.9" fill="#fe6c13" />
<polygon points="568.2,317.1 568.9,315.8 569.0,314.4 568.6,313.0 567.7,311.9 566.4,311.1 564.8,310.7 563.1,310.7 561.4,311.1 559.9,311.9 558.8,313.0 558.1,314.4 557.9,315.8 558.3,317.1 559.2,318.2 560.6,319.1 562.2,319.5 563.9,319.5 565.6,319.1 567.1,318.2" fill="#7a3608" />
<clipPath id="h96_111"><polygon points="568.2,317.1 568.9,315.8 569.0,314.4 568.6,313.0 567.7,311.9 566.4,311.1 564.8,310.7 563.1,310.7 561.4,311.1 559.9,311.9 558.8,313.0 558.1,314.4 557.9,315.8 558.3,317.1 559.2,318.2 560.6,319.1 562.2,319.5 563.9,319.5 565.6,319.1 567.1,318.2"/></clipPath>
<polygon points="568.8,319.4 569.5,318.1 569.6,316.7 569.2,315.3 568.3,314.2 567.0,313.4 565.4,313.0 563.6,313.0 561.9,313.4 560.5,314.2 559.3,315.3 558.7,316.7 558.5,318.1 558.9,319.4 559.8,320.5 561.1,321.3 562.8,321.8 564.5,321.8 566.2,321.3 567.7,320.5" fill="#dadada" clip-path="url(#h96_111)"/>
<text transform="matrix(-0.6580,0.8725,-1.0378,-0.4439,529.39,300.48)" font-family="'Liberation Serif',serif" font-size="35" font-weight="normal" fill="#ecb213" text-anchor="middle" stroke="#ecb213" stroke-width="1.15">2</text>
<polygon points="562.4,336.3 602.8,353.8 602.3,351.6 561.8,334.0" fill="#783509" stroke="#783509" stroke-width="0.6" stroke-linejoin="round" />
<polygon points="602.8,353.8 604.8,354.4 604.3,352.1 602.3,351.6" fill="#7a3609" stroke="#7a3609" stroke-width="0.6" stroke-linejoin="round" />
<polygon points="604.8,354.4 606.9,354.5 606.4,352.3 604.3,352.1" fill="#7d3709" stroke="#7d3709" stroke-width="0.6" stroke-linejoin="round" />
<polygon points="606.9,354.5 609.0,354.2 608.6,352.0 606.4,352.3" fill="#803809" stroke="#803809" stroke-width="0.6" stroke-linejoin="round" />
<polygon points="609.0,354.2 611.0,353.4 610.5,351.2 608.6,352.0" fill="#823a0a" stroke="#823a0a" stroke-width="0.6" stroke-linejoin="round" />
<polygon points="611.0,353.4 612.7,352.3 612.2,350.1 610.5,351.2" fill="#853b0a" stroke="#853b0a" stroke-width="0.6" stroke-linejoin="round" />
<polygon points="612.7,352.3 614.0,350.9 613.6,348.6 612.2,350.1" fill="#883c0a" stroke="#883c0a" stroke-width="0.6" stroke-linejoin="round" />
<polygon points="614.0,350.9 626.9,332.3 626.5,330.0 613.6,348.6" fill="#8a3d0a" stroke="#8a3d0a" stroke-width="0.6" stroke-linejoin="round" />
<polygon points="626.9,332.3 627.7,330.6 627.3,328.4 626.5,330.0" fill="#8a3d0a" stroke="#8a3d0a" stroke-width="0.6" stroke-linejoin="round" />
<polygon points="627.7,330.6 628.0,328.9 627.6,326.7 627.3,328.4" fill="#8a3d0a" stroke="#8a3d0a" stroke-width="0.6" stroke-linejoin="round" />
<polygon points="628.0,328.9 627.7,327.3 627.3,325.0 627.6,326.7" fill="#8a3d0a" stroke="#8a3d0a" stroke-width="0.6" stroke-linejoin="round" />
<polygon points="561.8,334.0 602.3,351.6 604.3,352.1 606.4,352.3 608.6,352.0 610.5,351.2 612.2,350.1 613.6,348.6 626.5,330.0 627.3,328.4 627.6,326.7 627.3,325.0 626.5,323.5 625.2,322.2 623.5,321.2 583.4,304.2" fill="#fe6c13" />
<polygon points="617.6,338.2 618.2,336.8 618.3,335.4 617.8,334.0 616.9,332.9 615.5,332.0 613.9,331.6 612.1,331.6 610.4,332.0 609.0,332.9 607.8,334.0 607.2,335.4 607.1,336.8 607.5,338.2 608.5,339.4 609.8,340.2 611.5,340.6 613.2,340.6 615.0,340.2 616.4,339.4" fill="#7a3608" />
<clipPath id="h143_111"><polygon points="617.6,338.2 618.2,336.8 618.3,335.4 617.8,334.0 616.9,332.9 615.5,332.0 613.9,331.6 612.1,331.6 610.4,332.0 609.0,332.9 607.8,334.0 607.2,335.4 607.1,336.8 607.5,338.2 608.5,339.4 609.8,340.2 611.5,340.6 613.2,340.6 615.0,340.2 616.4,339.4"/></clipPath>
<polygon points="618.0,340.4 618.6,339.1 618.7,337.7 618.3,336.3 617.3,335.1 616.0,334.3 614.3,333.9 612.6,333.9 610.9,334.3 609.4,335.1 608.3,336.3 607.6,337.7 607.5,339.1 608.0,340.4 608.9,341.6 610.3,342.5 611.9,342.9 613.7,342.9 615.4,342.5 616.9,341.6" fill="#dadada" clip-path="url(#h143_111)"/>
<text transform="matrix(-0.6437,0.8922,-1.0623,-0.4544,577.78,321.18)" font-family="'Liberation Serif',serif" font-size="35" font-weight="normal" fill="#ecb213" text-anchor="middle" stroke="#ecb213" stroke-width="1.15">0</text>
<polygon points="611.9,357.7 653.3,375.7 653.0,373.5 611.5,355.5" fill="#783509" stroke="#783509" stroke-width="0.6" stroke-linejoin="round" />
<polygon points="653.3,375.7 655.3,376.3 655.0,374.1 653.0,373.5" fill="#7a3609" stroke="#7a3609" stroke-width="0.6" stroke-linejoin="round" />
<polygon points="655.3,376.3 657.5,376.4 657.1,374.2 655.0,374.1" fill="#7d3709" stroke="#7d3709" stroke-width="0.6" stroke-linejoin="round" />
<polygon points="657.5,376.4 659.6,376.1 659.3,373.9 657.1,374.2" fill="#803809" stroke="#803809" stroke-width="0.6" stroke-linejoin="round" />
<polygon points="659.6,376.1 661.6,375.3 661.3,373.1 659.3,373.9" fill="#823a0a" stroke="#823a0a" stroke-width="0.6" stroke-linejoin="round" />
<polygon points="661.6,375.3 663.3,374.1 663.0,371.9 661.3,373.1" fill="#853b0a" stroke="#853b0a" stroke-width="0.6" stroke-linejoin="round" />
<polygon points="663.3,374.1 664.6,372.7 664.3,370.5 663.0,371.9" fill="#883c0a" stroke="#883c0a" stroke-width="0.6" stroke-linejoin="round" />
<polygon points="664.6,372.7 677.1,353.6 676.9,351.4 664.3,370.5" fill="#8a3d0a" stroke="#8a3d0a" stroke-width="0.6" stroke-linejoin="round" />
<polygon points="677.1,353.6 677.9,352.0 677.6,349.7 676.9,351.4" fill="#8a3d0a" stroke="#8a3d0a" stroke-width="0.6" stroke-linejoin="round" />
<polygon points="677.9,352.0 678.1,350.2 677.9,348.0 677.6,349.7" fill="#8a3d0a" stroke="#8a3d0a" stroke-width="0.6" stroke-linejoin="round" />
<polygon points="611.5,355.5 653.0,373.5 655.0,374.1 657.1,374.2 659.3,373.9 661.3,373.1 663.0,371.9 664.3,370.5 676.9,351.4 677.6,349.7 677.9,348.0 677.6,346.3 676.7,344.7 675.4,343.4 673.7,342.4 632.6,325.0" fill="#fe6c13" />
<polygon points="668.1,359.8 668.7,358.4 668.7,356.9 668.2,355.5 667.2,354.4 665.8,353.5 664.2,353.1 662.4,353.1 660.7,353.5 659.2,354.4 658.1,355.5 657.5,356.9 657.4,358.4 657.9,359.8 658.9,361.0 660.3,361.8 662.0,362.3 663.7,362.3 665.5,361.8 666.9,361.0" fill="#7a3608" />
<clipPath id="h189_111"><polygon points="668.1,359.8 668.7,358.4 668.7,356.9 668.2,355.5 667.2,354.4 665.8,353.5 664.2,353.1 662.4,353.1 660.7,353.5 659.2,354.4 658.1,355.5 657.5,356.9 657.4,358.4 657.9,359.8 658.9,361.0 660.3,361.8 662.0,362.3 663.7,362.3 665.5,361.8 666.9,361.0"/></clipPath>
<polygon points="668.3,362.0 668.9,360.6 669.0,359.2 668.5,357.8 667.5,356.6 666.1,355.7 664.5,355.3 662.7,355.3 661.0,355.7 659.5,356.6 658.4,357.8 657.8,359.2 657.7,360.6 658.2,362.0 659.2,363.2 660.6,364.1 662.3,364.5 664.0,364.5 665.8,364.1 667.2,363.2" fill="#dadada" clip-path="url(#h189_111)"/>
<text transform="matrix(-0.6286,0.9125,-1.0876,-0.4652,627.32,342.38)" font-family="'Liberation Serif',serif" font-size="35" font-weight="normal" fill="#ecb213" text-anchor="middle" stroke="#ecb213" stroke-width="1.15">3</text>
<polygon points="490.2,346.8 530.1,364.5 529.4,362.3 489.4,344.5" fill="#783509" stroke="#783509" stroke-width="0.6" stroke-linejoin="round" />
<polygon points="530.1,364.5 532.0,365.1 531.4,362.8 529.4,362.3" fill="#7a3609" stroke="#7a3609" stroke-width="0.6" stroke-linejoin="round" />
<polygon points="532.0,365.1 534.2,365.2 533.5,363.0 531.4,362.8" fill="#7d3709" stroke="#7d3709" stroke-width="0.6" stroke-linejoin="round" />
<polygon points="534.2,365.2 536.3,364.9 535.6,362.7 533.5,363.0" fill="#803809" stroke="#803809" stroke-width="0.6" stroke-linejoin="round" />
<polygon points="536.3,364.9 538.3,364.1 537.7,361.9 535.6,362.7" fill="#823a0a" stroke="#823a0a" stroke-width="0.6" stroke-linejoin="round" />
<polygon points="538.3,364.1 540.1,363.0 539.4,360.8 537.7,361.9" fill="#853b0a" stroke="#853b0a" stroke-width="0.6" stroke-linejoin="round" />
<polygon points="540.1,363.0 541.4,361.5 540.8,359.3 539.4,360.8" fill="#883c0a" stroke="#883c0a" stroke-width="0.6" stroke-linejoin="round" />
<polygon points="541.4,361.5 555.1,342.7 554.5,340.5 540.8,359.3" fill="#8a3d0a" stroke="#8a3d0a" stroke-width="0.6" stroke-linejoin="round" />
<polygon points="555.1,342.7 555.9,341.1 555.3,338.9 554.5,340.5" fill="#8a3d0a" stroke="#8a3d0a" stroke-width="0.6" stroke-linejoin="round" />
<polygon points="555.9,341.1 556.3,339.4 555.7,337.1 555.3,338.9" fill="#8a3d0a" stroke="#8a3d0a" stroke-width="0.6" stroke-linejoin="round" />
<polygon points="556.3,339.4 556.0,337.7 555.5,335.4 555.7,337.1" fill="#8a3d0a" stroke="#8a3d0a" stroke-width="0.6" stroke-linejoin="round" />
<polygon points="489.4,344.5 529.4,362.3 531.4,362.8 533.5,363.0 535.6,362.7 537.7,361.9 539.4,360.8 540.8,359.3 554.5,340.5 555.3,338.9 555.7,337.1 555.5,335.4 554.7,333.9 553.5,332.6 551.8,331.6 512.2,314.5" fill="#fe6c13" />
<polygon points="545.2,348.8 545.9,347.4 546.0,346.0 545.6,344.6 544.7,343.4 543.4,342.6 541.8,342.1 540.0,342.1 538.3,342.6 536.8,343.4 535.6,344.6 534.9,345.9 534.7,347.4 535.1,348.8 536.0,349.9 537.4,350.8 539.0,351.2 540.8,351.2 542.5,350.8 544.0,349.9" fill="#7a3608" />
<clipPath id="h96_76"><polygon points="545.2,348.8 545.9,347.4 546.0,346.0 545.6,344.6 544.7,343.4 543.4,342.6 541.8,342.1 540.0,342.1 538.3,342.6 536.8,343.4 535.6,344.6 534.9,345.9 534.7,347.4 535.1,348.8 536.0,349.9 537.4,350.8 539.0,351.2 540.8,351.2 542.5,350.8 544.0,349.9"/></clipPath>
<polygon points="545.8,351.0 546.5,349.6 546.7,348.2 546.3,346.8 545.4,345.6 544.0,344.8 542.4,344.4 540.6,344.4 538.9,344.8 537.4,345.6 536.3,346.8 535.6,348.2 535.4,349.6 535.8,351.0 536.7,352.2 538.0,353.0 539.7,353.5 541.4,353.5 543.1,353.0 544.7,352.2" fill="#dadada" clip-path="url(#h96_76)"/>
<text transform="matrix(-0.6793,0.9007,-1.0485,-0.4590,505.94,331.59)" font-family="'Liberation Serif',serif" font-size="35" font-weight="normal" fill="#ecb213" text-anchor="middle" stroke="#ecb213" stroke-width="1.15">2</text>
<polygon points="539.1,368.4 580.0,386.6 579.4,384.4 538.4,366.2" fill="#783509" stroke="#783509" stroke-width="0.6" stroke-linejoin="round" />
<polygon points="580.0,386.6 581.9,387.2 581.4,385.0 579.4,384.4" fill="#7a3609" stroke="#7a3609" stroke-width="0.6" stroke-linejoin="round" />
<polygon points="581.9,387.2 584.1,387.3 583.6,385.1 581.4,385.0" fill="#7d3709" stroke="#7d3709" stroke-width="0.6" stroke-linejoin="round" />
<polygon points="584.1,387.3 586.2,387.0 585.7,384.8 583.6,385.1" fill="#803809" stroke="#803809" stroke-width="0.6" stroke-linejoin="round" />
<polygon points="586.2,387.0 588.3,386.2 587.7,384.0 585.7,384.8" fill="#823a0a" stroke="#823a0a" stroke-width="0.6" stroke-linejoin="round" />
<polygon points="588.3,386.2 590.0,385.0 589.5,382.9 587.7,384.0" fill="#853b0a" stroke="#853b0a" stroke-width="0.6" stroke-linejoin="round" />
<polygon points="590.0,385.0 591.4,383.5 590.8,381.4 589.5,382.9" fill="#883c0a" stroke="#883c0a" stroke-width="0.6" stroke-linejoin="round" />
<polygon points="591.4,383.5 604.7,364.3 604.2,362.1 590.8,381.4" fill="#8a3d0a" stroke="#8a3d0a" stroke-width="0.6" stroke-linejoin="round" />
<polygon points="604.7,364.3 605.5,362.7 605.0,360.4 604.2,362.1" fill="#8a3d0a" stroke="#8a3d0a" stroke-width="0.6" stroke-linejoin="round" />
<polygon points="605.5,362.7 605.8,360.9 605.3,358.7 605.0,360.4" fill="#8a3d0a" stroke="#8a3d0a" stroke-width="0.6" stroke-linejoin="round" />
<polygon points="605.8,360.9 605.5,359.2 605.1,356.9 605.3,358.7" fill="#8a3d0a" stroke="#8a3d0a" stroke-width="0.6" stroke-linejoin="round" />
<polygon points="538.4,366.2 579.4,384.4 581.4,385.0 583.6,385.1 585.7,384.8 587.7,384.0 589.5,382.9 590.8,381.4 604.2,362.1 605.0,360.4 605.3,358.7 605.1,356.9 604.3,355.4 603.0,354.0 601.3,353.0 560.8,335.5" fill="#fe6c13" />
<polygon points="595.0,370.6 595.7,369.2 595.8,367.7 595.4,366.3 594.4,365.1 593.1,364.2 591.4,363.8 589.6,363.8 587.9,364.2 586.4,365.1 585.2,366.3 584.5,367.7 584.4,369.2 584.8,370.6 585.8,371.8 587.2,372.7 588.8,373.1 590.6,373.1 592.4,372.7 593.9,371.8" fill="#7a3608" />
<clipPath id="h143_76"><polygon points="595.0,370.6 595.7,369.2 595.8,367.7 595.4,366.3 594.4,365.1 593.1,364.2 591.4,363.8 589.6,363.8 587.9,364.2 586.4,365.1 585.2,366.3 584.5,367.7 584.4,369.2 584.8,370.6 585.8,371.8 587.2,372.7 588.8,373.1 590.6,373.1 592.4,372.7 593.9,371.8"/></clipPath>
<polygon points="595.5,372.8 596.2,371.4 596.3,369.9 595.9,368.5 594.9,367.3 593.5,366.4 591.9,366.0 590.1,366.0 588.4,366.4 586.9,367.3 585.7,368.5 585.1,369.9 584.9,371.4 585.4,372.8 586.3,374.0 587.7,374.9 589.3,375.3 591.1,375.3 592.9,374.9 594.4,374.0" fill="#dadada" clip-path="url(#h143_76)"/>
<text transform="matrix(-0.6648,0.9213,-1.0736,-0.4700,554.83,352.99)" font-family="'Liberation Serif',serif" font-size="35" font-weight="normal" fill="#ecb213" text-anchor="middle" stroke="#ecb213" stroke-width="1.15">1</text>
<polygon points="589.2,390.6 631.0,409.2 630.6,407.1 588.7,388.5" fill="#783509" stroke="#783509" stroke-width="0.6" stroke-linejoin="round" />
<polygon points="631.0,409.2 633.1,409.8 632.7,407.7 630.6,407.1" fill="#7a3609" stroke="#7a3609" stroke-width="0.6" stroke-linejoin="round" />
<polygon points="633.1,409.8 635.2,410.0 634.8,407.8 632.7,407.7" fill="#7d3709" stroke="#7d3709" stroke-width="0.6" stroke-linejoin="round" />
<polygon points="635.2,410.0 637.4,409.6 637.0,407.5 634.8,407.8" fill="#803809" stroke="#803809" stroke-width="0.6" stroke-linejoin="round" />
<polygon points="637.4,409.6 639.4,408.8 639.1,406.7 637.0,407.5" fill="#823a0a" stroke="#823a0a" stroke-width="0.6" stroke-linejoin="round" />
<polygon points="639.4,408.8 641.2,407.6 640.8,405.5 639.1,406.7" fill="#853b0a" stroke="#853b0a" stroke-width="0.6" stroke-linejoin="round" />
<polygon points="641.2,407.6 642.5,406.1 642.1,404.0 640.8,405.5" fill="#883c0a" stroke="#883c0a" stroke-width="0.6" stroke-linejoin="round" />
<polygon points="642.5,406.1 655.5,386.4 655.2,384.3 642.1,404.0" fill="#8a3d0a" stroke="#8a3d0a" stroke-width="0.6" stroke-linejoin="round" />
<polygon points="655.5,386.4 656.3,384.7 656.0,382.6 655.2,384.3" fill="#8a3d0a" stroke="#8a3d0a" stroke-width="0.6" stroke-linejoin="round" />
<polygon points="656.3,384.7 656.5,382.9 656.2,380.8 656.0,382.6" fill="#8a3d0a" stroke="#8a3d0a" stroke-width="0.6" stroke-linejoin="round" />
<polygon points="588.7,388.5 630.6,407.1 632.7,407.7 634.8,407.8 637.0,407.5 639.1,406.7 640.8,405.5 642.1,404.0 655.2,384.3 656.0,382.6 656.2,380.8 655.9,379.0 655.1,377.4 653.7,376.0 652.0,375.0 610.5,357.0" fill="#fe6c13" />
<polygon points="646.1,392.9 646.7,391.5 646.8,390.0 646.3,388.5 645.3,387.3 643.9,386.4 642.2,386.0 640.4,386.0 638.7,386.4 637.2,387.3 636.0,388.5 635.4,390.0 635.3,391.5 635.8,392.9 636.8,394.2 638.2,395.1 639.9,395.5 641.7,395.5 643.4,395.1 645.0,394.2" fill="#7a3608" />
<clipPath id="h189_76"><polygon points="646.1,392.9 646.7,391.5 646.8,390.0 646.3,388.5 645.3,387.3 643.9,386.4 642.2,386.0 640.4,386.0 638.7,386.4 637.2,387.3 636.0,388.5 635.4,390.0 635.3,391.5 635.8,392.9 636.8,394.2 638.2,395.1 639.9,395.5 641.7,395.5 643.4,395.1 645.0,394.2"/></clipPath>
<polygon points="646.4,395.1 647.1,393.7 647.2,392.2 646.7,390.7 645.7,389.5 644.3,388.6 642.6,388.1 640.8,388.1 639.0,388.6 637.5,389.5 636.4,390.7 635.8,392.1 635.7,393.7 636.1,395.1 637.1,396.3 638.6,397.2 640.2,397.7 642.1,397.7 643.8,397.2 645.3,396.3" fill="#dadada" clip-path="url(#h189_76)"/>
<text transform="matrix(-0.6494,0.9427,-1.0996,-0.4814,604.91,374.91)" font-family="'Liberation Serif',serif" font-size="35" font-weight="normal" fill="#ecb213" text-anchor="middle" stroke="#ecb213" stroke-width="1.15">7</text>
<polygon points="351.0,798.8 494.3,586.0 491.5,580.4 346.4,795.0" fill="#8a3d0a" stroke="#8a3d0a" stroke-width="0.6" stroke-linejoin="round" />
<polygon points="494.3,586.0 495.1,583.1 492.4,577.4 491.5,580.4" fill="#8a3d0a" stroke="#8a3d0a" stroke-width="0.6" stroke-linejoin="round" />
<polygon points="495.1,583.1 494.3,577.8 491.6,572.1 492.4,577.4" fill="#8a3d0a" stroke="#8a3d0a" stroke-width="0.6" stroke-linejoin="round" />
<polygon points="484.0,561.8 481.1,551.4 478.3,545.5 481.2,556.0" fill="#8a3d0a" stroke="#8a3d0a" stroke-width="0.6" stroke-linejoin="round" />
<polygon points="481.1,551.4 480.7,540.9 477.8,535.0 478.3,545.5" fill="#8a3d0a" stroke="#8a3d0a" stroke-width="0.6" stroke-linejoin="round" />
<polygon points="480.7,540.9 478.7,530.4 475.9,524.4 477.8,535.0" fill="#8a3d0a" stroke="#8a3d0a" stroke-width="0.6" stroke-linejoin="round" />
<polygon points="478.7,530.4 474.8,520.7 472.0,514.6 475.9,524.4" fill="#8a3d0a" stroke="#8a3d0a" stroke-width="0.6" stroke-linejoin="round" />
<polygon points="210.4,718.3 351.0,798.8 346.4,795.0 204.5,713.7" fill="#783509" stroke="#783509" stroke-width="0.6" stroke-linejoin="round" />
<polygon points="346.4,795.0 491.5,580.4 492.4,577.4 491.6,572.1 486.3,563.7 481.2,556.0 478.3,545.5 477.8,535.0 475.9,524.4 472.0,514.6 466.1,505.6 456.9,499.1 445.6,495.7 433.3,495.8 421.2,497.7 409.4,501.4 398.3,506.0 386.3,509.0 376.2,509.0 365.3,509.2 359.5,511.1 356.9,513.1 204.5,713.7" fill="#fe6c13" />
<clipPath id="plq"><polygon points="363.6,518.1 365.7,517.4 374.8,517.3 386.2,517.2 400.4,513.8 411.9,508.9 422.5,505.7 433.0,504.0 443.0,503.9 451.6,506.5 458.5,511.5 463.3,518.8 466.7,527.3 468.4,536.8 468.8,547.6 472.1,560.0 477.8,568.6 482.3,575.7 482.6,577.7 356.5,762.8 231.9,692.6"/></clipPath>
<g clip-path="url(#plq)">
<polygon points="363.6,518.1 365.7,517.4 374.8,517.3 386.2,517.2 400.4,513.8 411.9,508.9 422.5,505.7 433.0,504.0 443.0,503.9 451.6,506.5 458.5,511.5 463.3,518.8 466.7,527.3 468.4,536.8 468.8,547.6 472.1,560.0 477.8,568.6 482.3,575.7 482.6,577.7 356.5,762.8 231.9,692.6" fill="#7f3809" />
<polygon points="367.1,523.7 369.2,523.0 378.3,522.8 389.6,522.8 403.7,519.3 415.0,514.6 425.5,511.3 435.9,509.6 445.8,509.5 454.4,512.2 461.3,517.1 466.0,524.3 469.4,532.8 471.1,542.2 471.5,553.0 474.8,565.3 480.5,573.9 484.9,580.9 485.1,582.9 360.6,766.6 237.0,696.9" fill="#afe5f1" />
</g>
<polygon points="331.4,641.5 332.3,640.0 329.4,636.6 328.5,638.2" fill="#8a3d0a" stroke="#8a3d0a" stroke-width="0.6" stroke-linejoin="round" />
<polygon points="332.3,640.0 332.7,638.4 329.8,635.0 329.4,636.6" fill="#8a3d0a" stroke="#8a3d0a" stroke-width="0.6" stroke-linejoin="round" />
<polygon points="332.7,638.4 332.7,636.8 329.8,633.4 329.8,635.0" fill="#8a3d0a" stroke="#8a3d0a" stroke-width="0.6" stroke-linejoin="round" />
<polygon points="332.7,636.8 332.2,635.3 329.3,631.9 329.8,633.4" fill="#8a3d0a" stroke="#8a3d0a" stroke-width="0.6" stroke-linejoin="round" />
<polygon points="332.2,635.3 331.3,634.1 328.4,630.7 329.3,631.9" fill="#8a3d0a" stroke="#8a3d0a" stroke-width="0.6" stroke-linejoin="round" />
<polygon points="320.8,643.3 322.0,644.2 319.1,640.9 317.8,639.9" fill="#783509" stroke="#783509" stroke-width="0.6" stroke-linejoin="round" />
<polygon points="322.0,644.2 323.5,644.8 320.6,641.4 319.1,640.9" fill="#7a3609" stroke="#7a3609" stroke-width="0.6" stroke-linejoin="round" />
<polygon points="323.5,644.8 325.2,644.9 322.3,641.6 320.6,641.4" fill="#7d3709" stroke="#7d3709" stroke-width="0.6" stroke-linejoin="round" />
<polygon points="325.2,644.9 327.0,644.6 324.0,641.3 322.3,641.6" fill="#803809" stroke="#803809" stroke-width="0.6" stroke-linejoin="round" />
<polygon points="327.0,644.6 328.7,643.9 325.7,640.6 324.0,641.3" fill="#823a0a" stroke="#823a0a" stroke-width="0.6" stroke-linejoin="round" />
<polygon points="328.7,643.9 330.2,642.9 327.3,639.5 325.7,640.6" fill="#853b0a" stroke="#853b0a" stroke-width="0.6" stroke-linejoin="round" />
<polygon points="330.2,642.9 331.4,641.5 328.5,638.2 327.3,639.5" fill="#883c0a" stroke="#883c0a" stroke-width="0.6" stroke-linejoin="round" />
<polygon points="328.5,638.2 329.4,636.6 329.8,635.0 329.8,633.4 329.3,631.9 328.4,630.7 327.2,629.8 325.7,629.2 324.0,629.1 322.2,629.4 320.5,630.1 319.0,631.1 317.8,632.4 316.9,634.0 316.5,635.6 316.5,637.2 316.9,638.7 317.8,639.9 319.1,640.9 320.6,641.4 322.3,641.6 324.0,641.3 325.7,640.6 327.3,639.5" fill="#fe6c13" />
<polygon points="383.4,669.4 384.3,667.9 381.7,664.6 380.8,666.2" fill="#8a3d0a" stroke="#8a3d0a" stroke-width="0.6" stroke-linejoin="round" />
<polygon points="384.3,667.9 384.7,666.2 382.1,662.9 381.7,664.6" fill="#8a3d0a" stroke="#8a3d0a" stroke-width="0.6" stroke-linejoin="round" />
<polygon points="384.7,666.2 384.6,664.6 382.0,661.3 382.1,662.9" fill="#8a3d0a" stroke="#8a3d0a" stroke-width="0.6" stroke-linejoin="round" />
<polygon points="384.6,664.6 384.1,663.1 381.5,659.8 382.0,661.3" fill="#8a3d0a" stroke="#8a3d0a" stroke-width="0.6" stroke-linejoin="round" />
<polygon points="384.1,663.1 383.2,661.8 380.6,658.5 381.5,659.8" fill="#8a3d0a" stroke="#8a3d0a" stroke-width="0.6" stroke-linejoin="round" />
<polygon points="372.7,671.2 374.0,672.2 371.3,669.0 370.0,668.0" fill="#783509" stroke="#783509" stroke-width="0.6" stroke-linejoin="round" />
<polygon points="374.0,672.2 375.5,672.7 372.9,669.5 371.3,669.0" fill="#7a3609" stroke="#7a3609" stroke-width="0.6" stroke-linejoin="round" />
<polygon points="375.5,672.7 377.2,672.9 374.6,669.7 372.9,669.5" fill="#7d3709" stroke="#7d3709" stroke-width="0.6" stroke-linejoin="round" />
<polygon points="377.2,672.9 379.0,672.6 376.4,669.4 374.6,669.7" fill="#803809" stroke="#803809" stroke-width="0.6" stroke-linejoin="round" />
<polygon points="379.0,672.6 380.7,671.9 378.1,668.7 376.4,669.4" fill="#823a0a" stroke="#823a0a" stroke-width="0.6" stroke-linejoin="round" />
<polygon points="380.7,671.9 382.2,670.8 379.6,667.6 378.1,668.7" fill="#853b0a" stroke="#853b0a" stroke-width="0.6" stroke-linejoin="round" />
<polygon points="382.2,670.8 383.4,669.4 380.8,666.2 379.6,667.6" fill="#883c0a" stroke="#883c0a" stroke-width="0.6" stroke-linejoin="round" />
<polygon points="380.8,666.2 381.7,664.6 382.1,662.9 382.0,661.3 381.5,659.8 380.6,658.5 379.3,657.6 377.8,657.0 376.0,656.9 374.3,657.2 372.6,657.9 371.1,658.9 369.8,660.3 369.0,661.9 368.6,663.5 368.6,665.2 369.1,666.7 370.0,668.0 371.3,669.0 372.9,669.5 374.6,669.7 376.4,669.4 378.1,668.7 379.6,667.6" fill="#fe6c13" />
<text transform="matrix(1.1580,0.6486,-0.9383,1.2528,247.99,689.69) scale(0.719,1)" font-family="'Liberation Sans',sans-serif" font-size="18" font-weight="bold" fill="#a04a0c" text-anchor="start" stroke="#a04a0c" stroke-width="0.5" >Ramazan-ı</text>
<text transform="matrix(1.1586,0.6489,-0.9391,1.2535,247.65,689.39) scale(0.719,1)" font-family="'Liberation Sans',sans-serif" font-size="18" font-weight="bold" fill="#a04a0c" text-anchor="start" stroke="#a04a0c" stroke-width="0.5" >Ramazan-ı</text>
<text transform="matrix(1.1593,0.6493,-0.9399,1.2542,247.31,689.09) scale(0.719,1)" font-family="'Liberation Sans',sans-serif" font-size="18" font-weight="bold" fill="#a04a0c" text-anchor="start" stroke="#a04a0c" stroke-width="0.5" >Ramazan-ı</text>
<text transform="matrix(1.1599,0.6496,-0.9407,1.2548,246.97,688.79) scale(0.719,1)" font-family="'Liberation Sans',sans-serif" font-size="18" font-weight="bold" fill="#e8731c" text-anchor="start" >Ramazan-ı</text>
<text transform="matrix(1.2070,0.6761,-0.9137,1.3039,328.72,734.91) scale(0.719,1)" font-family="'Liberation Sans',sans-serif" font-size="18" font-weight="bold" fill="#a04a0c" text-anchor="start" stroke="#a04a0c" stroke-width="0.5" >Şerif</text>
<text transform="matrix(1.2077,0.6764,-0.9144,1.3046,328.42,734.63) scale(0.719,1)" font-family="'Liberation Sans',sans-serif" font-size="18" font-weight="bold" fill="#a04a0c" text-anchor="start" stroke="#a04a0c" stroke-width="0.5" >Şerif</text>
<text transform="matrix(1.2085,0.6768,-0.9152,1.3054,328.13,734.35) scale(0.719,1)" font-family="'Liberation Sans',sans-serif" font-size="18" font-weight="bold" fill="#a04a0c" text-anchor="start" stroke="#a04a0c" stroke-width="0.5" >Şerif</text>
<text transform="matrix(1.2092,0.6772,-0.9160,1.3061,327.83,734.07) scale(0.719,1)" font-family="'Liberation Sans',sans-serif" font-size="18" font-weight="bold" fill="#e8731c" text-anchor="start" >Şerif</text>
<text transform="matrix(1.1656,0.6156,-0.8517,1.1916,369.72,630.78)" font-family="'Liberation Sans',sans-serif" font-size="11.5" font-weight="bold" fill="#a04a0c" text-anchor="middle" stroke="#a04a0c" stroke-width="0.5" >GÜN</text>
<text transform="matrix(1.1663,0.6159,-0.8524,1.1922,369.47,630.45)" font-family="'Liberation Sans',sans-serif" font-size="11.5" font-weight="bold" fill="#a04a0c" text-anchor="middle" stroke="#a04a0c" stroke-width="0.5" >GÜN</text>
<text transform="matrix(1.1670,0.6162,-0.8531,1.1928,369.21,630.12)" font-family="'Liberation Sans',sans-serif" font-size="11.5" font-weight="bold" fill="#a04a0c" text-anchor="middle" stroke="#a04a0c" stroke-width="0.5" >GÜN</text>
<text transform="matrix(1.1676,0.6165,-0.8538,1.1934,368.96,629.79)" font-family="'Liberation Sans',sans-serif" font-size="11.5" font-weight="bold" fill="#a04a0c" text-anchor="middle" stroke="#a04a0c" stroke-width="0.5" >GÜN</text>
<text transform="matrix(1.1683,0.6168,-0.8545,1.1939,368.70,629.45)" font-family="'Liberation Sans',sans-serif" font-size="11.5" font-weight="bold" fill="#e8731c" text-anchor="middle" >GÜN</text>
<text transform="matrix(1.1543,0.5998,-0.8354,1.1623,380.87,602.77) scale(0.71,1)" font-family="'DejaVu Sans',sans-serif" font-size="59" font-weight="bold" fill="#8a3d0a" text-anchor="middle" stroke="#8a3d0a" stroke-width="0.5" direction="rtl" unicode-bidi="bidi-override">الله</text>
<text transform="matrix(1.1549,0.6000,-0.8359,1.1627,380.66,602.47) scale(0.71,1)" font-family="'DejaVu Sans',sans-serif" font-size="59" font-weight="bold" fill="#8a3d0a" text-anchor="middle" stroke="#8a3d0a" stroke-width="0.5" direction="rtl" unicode-bidi="bidi-override">الله</text>
<text transform="matrix(1.1555,0.6003,-0.8365,1.1632,380.45,602.17) scale(0.71,1)" font-family="'DejaVu Sans',sans-serif" font-size="59" font-weight="bold" fill="#8a3d0a" text-anchor="middle" stroke="#8a3d0a" stroke-width="0.5" direction="rtl" unicode-bidi="bidi-override">الله</text>
<text transform="matrix(1.1560,0.6005,-0.8371,1.1637,380.23,601.88) scale(0.71,1)" font-family="'DejaVu Sans',sans-serif" font-size="59" font-weight="bold" fill="#8a3d0a" text-anchor="middle" stroke="#8a3d0a" stroke-width="0.5" direction="rtl" unicode-bidi="bidi-override">الله</text>
<text transform="matrix(1.1566,0.6008,-0.8376,1.1642,380.02,601.58) scale(0.71,1)" font-family="'DejaVu Sans',sans-serif" font-size="59" font-weight="bold" fill="#8a3d0a" text-anchor="middle" stroke="#8a3d0a" stroke-width="0.5" direction="rtl" unicode-bidi="bidi-override">الله</text>
<text transform="matrix(1.1572,0.6010,-0.8382,1.1646,379.81,601.28) scale(0.71,1)" font-family="'DejaVu Sans',sans-serif" font-size="59" font-weight="bold" fill="#8a3d0a" text-anchor="middle" stroke="#8a3d0a" stroke-width="0.5" direction="rtl" unicode-bidi="bidi-override">الله</text>
<text transform="matrix(1.1577,0.6012,-0.8388,1.1651,379.60,600.98) scale(0.71,1)" font-family="'DejaVu Sans',sans-serif" font-size="59" font-weight="bold" fill="#8a3d0a" text-anchor="middle" stroke="#8a3d0a" stroke-width="0.5" direction="rtl" unicode-bidi="bidi-override">الله</text>
<text transform="matrix(1.1583,0.6015,-0.8393,1.1656,379.39,600.68) scale(0.71,1)" font-family="'DejaVu Sans',sans-serif" font-size="59" font-weight="bold" fill="#8a3d0a" text-anchor="middle" stroke="#8a3d0a" stroke-width="0.5" direction="rtl" unicode-bidi="bidi-override">الله</text>
<text transform="matrix(1.1589,0.6017,-0.8399,1.1661,379.18,600.38) scale(0.71,1)" font-family="'DejaVu Sans',sans-serif" font-size="59" font-weight="bold" fill="#8a3d0a" text-anchor="middle" stroke="#8a3d0a" stroke-width="0.5" direction="rtl" unicode-bidi="bidi-override">الله</text>
<text transform="matrix(1.1594,0.6020,-0.8405,1.1666,378.96,600.08) scale(0.71,1)" font-family="'DejaVu Sans',sans-serif" font-size="59" font-weight="bold" fill="#8a3d0a" text-anchor="middle" stroke="#8a3d0a" stroke-width="0.5" direction="rtl" unicode-bidi="bidi-override">الله</text>
<text transform="matrix(1.1600,0.6022,-0.8410,1.1670,378.75,599.78) scale(0.71,1)" font-family="'DejaVu Sans',sans-serif" font-size="59" font-weight="bold" fill="#8a3d0a" text-anchor="middle" stroke="#8a3d0a" stroke-width="0.5" direction="rtl" unicode-bidi="bidi-override">الله</text>
<text transform="matrix(1.1606,0.6024,-0.8416,1.1675,378.54,599.48) scale(0.71,1)" font-family="'DejaVu Sans',sans-serif" font-size="59" font-weight="bold" fill="#fe6c13" text-anchor="middle" direction="rtl" unicode-bidi="bidi-override">الله</text>
<polyline points="449.8,526.2 449.3,525.1 448.8,524.1 448.1,523.2 447.2,522.3 446.3,521.6 445.3,521.0 444.1,520.4 442.9,520.1 441.7,519.8 440.4,519.6 439.1,519.6 437.7,519.8 436.4,520.0 435.1,520.4 433.8,520.9 432.6,521.5 431.4,522.3 430.3,523.1 429.4,524.0 428.5,525.0 427.7,526.1 427.1,527.2 426.6,528.4 426.3,529.6 426.1,530.8 426.0,532.0 426.1,533.1 426.4,534.3 426.8,535.4 427.3,536.4 428.0,537.4 428.8,538.2 429.7,539.0 430.7,539.7 431.8,540.2 433.0,540.7 434.2,541.0 435.5,541.1 436.9,541.2 438.2,541.1" fill="none" stroke="#8a3d0a" stroke-width="2.2" stroke-linecap="round"/>
<polygon points="456.3,533.5 453.8,536.0 450.6,535.2 452.2,537.8 449.9,540.4 453.4,539.5 455.3,541.9 455.8,538.8 459.2,537.7 456.0,536.6" fill="#8a3d0a" />
<polyline points="449.5,525.6 449.0,524.5 448.4,523.5 447.7,522.5 446.9,521.7 446.0,521.0 444.9,520.3 443.8,519.8 442.6,519.4 441.4,519.1 440.1,519.0 438.7,519.0 437.4,519.1 436.1,519.4 434.7,519.8 433.5,520.3 432.2,520.9 431.1,521.6 430.0,522.5 429.0,523.4 428.2,524.4 427.4,525.5 426.8,526.6 426.3,527.7 425.9,528.9 425.7,530.1 425.7,531.3 425.8,532.5 426.0,533.6 426.4,534.7 426.9,535.8 427.6,536.7 428.4,537.6 429.3,538.4 430.3,539.1 431.4,539.6 432.6,540.0 433.9,540.3 435.2,540.5 436.5,540.6 437.9,540.5" fill="none" stroke="#8a3d0a" stroke-width="2.2" stroke-linecap="round"/>
<polygon points="456.0,532.9 453.5,535.4 450.2,534.5 451.9,537.1 449.6,539.8 453.1,538.9 455.0,541.3 455.5,538.2 458.9,537.0 455.7,536.0" fill="#8a3d0a" />
<polyline points="449.1,524.9 448.7,523.8 448.1,522.8 447.4,521.9 446.6,521.1 445.7,520.3 444.6,519.7 443.5,519.2 442.3,518.8 441.0,518.5 439.7,518.4 438.4,518.4 437.1,518.5 435.7,518.8 434.4,519.1 433.1,519.6 431.9,520.3 430.7,521.0 429.7,521.8 428.7,522.8 427.8,523.8 427.1,524.8 426.4,525.9 425.9,527.1 425.6,528.3 425.4,529.5 425.3,530.7 425.4,531.9 425.7,533.0 426.1,534.1 426.6,535.1 427.3,536.1 428.1,537.0 429.0,537.8 430.0,538.4 431.1,539.0 432.3,539.4 433.6,539.7 434.9,539.9 436.2,539.9 437.6,539.8" fill="none" stroke="#8a3d0a" stroke-width="2.2" stroke-linecap="round"/>
<polygon points="455.6,532.2 453.2,534.7 449.9,533.9 451.5,536.5 449.3,539.1 452.8,538.2 454.6,540.7 455.1,537.5 458.6,536.4 455.4,535.4" fill="#8a3d0a" />
<polyline points="448.8,524.3 448.4,523.2 447.8,522.2 447.1,521.3 446.3,520.4 445.3,519.7 444.3,519.1 443.2,518.5 442.0,518.1 440.7,517.9 439.4,517.7 438.1,517.7 436.7,517.9 435.4,518.1 434.1,518.5 432.8,519.0 431.6,519.6 430.4,520.4 429.3,521.2 428.3,522.1 427.5,523.1 426.7,524.2 426.1,525.3 425.6,526.5 425.2,527.7 425.0,528.9 425.0,530.1 425.1,531.2 425.3,532.4 425.7,533.5 426.2,534.5 426.9,535.5 427.7,536.4 428.6,537.1 429.6,537.8 430.8,538.4 432.0,538.8 433.2,539.1 434.5,539.3 435.9,539.3 437.2,539.2" fill="none" stroke="#e8731c" stroke-width="1.9" stroke-linecap="round"/>
<polygon points="455.3,531.6 452.9,534.1 449.6,533.3 451.2,535.9 449.0,538.5 452.4,537.6 454.3,540.1 454.8,536.9 458.2,535.8 455.1,534.7" fill="#e8731c" />
<polyline points="386.2,553.7 388.1,548.4 401.6,546.4 416.1,548.8" fill="none" stroke="#8a3d0a" stroke-width="2.6" stroke-linecap="round" stroke-linejoin="round"/>
<polyline points="384.6,551.5 386.5,546.2 400.0,544.2 414.5,546.6" fill="none" stroke="#fe6c13" stroke-width="2.6" stroke-linecap="round" stroke-linejoin="round"/>
<polyline points="430.1,559.4 434.6,556.8 446.6,557.8 458.8,560.4" fill="none" stroke="#8a3d0a" stroke-width="2.6" stroke-linecap="round" stroke-linejoin="round"/>
<polyline points="428.5,557.2 433.0,554.6 445.0,555.6 457.2,558.2" fill="none" stroke="#fe6c13" stroke-width="2.6" stroke-linecap="round" stroke-linejoin="round"/>
<polyline points="426.4,542.7 424.8,549.7 423.1,554.7 427.1,557.7" fill="none" stroke="#8a3d0a" stroke-width="2.2" stroke-linecap="round" stroke-linejoin="round"/>
<polyline points="424.8,540.5 423.2,547.5 421.5,552.5 425.5,555.5" fill="none" stroke="#fe6c13" stroke-width="2.2" stroke-linecap="round" stroke-linejoin="round"/>
<polygon points="908.0,465.2 1061.3,530.3 1066.6,540.9 1067.5,547.9 1065.3,557.6 1061.3,565.6 1055.8,574.1 1049.3,579.6 1041.8,581.8 1034.8,579.6 886.8,513.6 880.7,510.5 876.4,505.6 875.1,500.6 889.4,472.0 892.8,468.6 898.1,467.0" fill="#a84b0c" stroke="#a84b0c" stroke-width="1" stroke-linejoin="round" />
<polygon points="907.2,460.6 1060.5,525.7 1065.8,536.3 1066.7,543.3 1064.5,553.0 1060.5,561.0 1055.0,569.5 1048.5,575.0 1041.0,577.2 1034.0,575.0 886.0,509.0 879.9,505.9 875.6,501.0 874.3,496.0 888.6,467.4 892.0,464.0 897.3,462.4" fill="#fe6c13" stroke="#fe6c13" stroke-width="0.6" stroke-linejoin="round" />
<polygon points="898.5,481.7 1046.4,544.2 1044.2,551.4 896.0,488.9" fill="#6f3208" />
<line x1="893.8" y1="493.8" x2="1042" y2="558.3" stroke="#b8530f" stroke-width="0.7" stroke-dasharray="0.8 2.2"/>
<line x1="896" y1="488.9" x2="893.8" y2="493.8" stroke="#d9651a" stroke-width="0.6"/>
<polygon points="911.2,448.6 1063.1,512.5 1060.5,525.7 907.2,460.6" fill="#6f3208" stroke="#6f3208" stroke-width="0.8" stroke-linejoin="round" />
<polygon points="1094.0,448.2 1063.1,512.5 1060.5,525.7 1064.0,520.0 1094.5,452.0" fill="#8a3e0a" />
<path d="M942.8,388.6Q944.7,385.1 948.4,386.7L1090.3,446.6Q1094.0,448.2 1092.3,451.8L1064.8,508.9Q1063.1,512.5 1059.4,510.9L914.9,450.2Q911.2,448.6 913.1,445.1Z" fill="#fe6c13" />
<path d="M946.8,393.2Q948.2,390.6 951.0,391.8L1084.8,448.2Q1087.6,449.4 1086.4,452.1L1063.4,504.9Q1062.2,507.6 1059.4,506.4L920.1,448.4Q917.3,447.2 918.7,444.6Z" fill="#7d380a" />
<path d="M940.1,413.5Q941.4,411.4 943.7,412.4L1075.8,468.3Q1078.1,469.3 1077.1,471.6L1063.0,504.9Q1062.0,507.2 1059.7,506.2L921.7,448.4Q919.4,447.4 920.7,445.3Z" fill="#fe6c13" />
<line x1="921" y1="449.5" x2="1061" y2="508.6" stroke="#c45a10" stroke-width="0.7" stroke-dasharray="0.8 2.2"/>
<polygon points="815.0,277.9 814.8,278.7 814.9,279.5 815.5,280.2 816.3,280.7 827.3,285.1 828.3,285.3 829.4,285.2 830.3,284.8 830.9,284.1 836.1,275.6 836.3,274.8 836.1,274.0 835.6,273.3 834.8,272.8 823.8,268.5 822.8,268.3 821.8,268.4 820.9,268.8 820.3,269.4" fill="#ececec" stroke="#808080" stroke-width="1.45" stroke-linejoin="round"/>
<polygon points="816.4,278.1 816.2,278.8 816.5,279.4 817.2,279.9 827.6,284.0 828.4,284.1 829.3,283.9 829.8,283.4 834.7,275.4 834.8,274.7 834.5,274.1 833.9,273.6 823.6,269.5 822.7,269.4 821.9,269.6 821.3,270.1" fill="none" stroke="#f3f3f3" stroke-width="0.7" stroke-linejoin="round"/>
<polyline points="819.1,278.4 832.0,275.1" fill="none" stroke="#808080" stroke-width="1.2" stroke-linejoin="round" stroke-linecap="round"/>
<polyline points="823.2,271.6 827.9,281.9" fill="none" stroke="#808080" stroke-width="1.2" stroke-linejoin="round" stroke-linecap="round"/>
<polygon points="803.9,296.0 803.7,296.8 803.8,297.6 804.3,298.4 805.2,298.9 816.3,303.3 817.3,303.6 818.3,303.5 819.2,303.0 819.9,302.4 825.1,293.7 825.4,292.9 825.2,292.0 824.7,291.3 823.9,290.8 812.8,286.4 811.8,286.2 810.8,286.3 809.9,286.7 809.2,287.4" fill="#ececec" stroke="#808080" stroke-width="1.45" stroke-linejoin="round"/>
<polygon points="805.3,296.2 805.1,296.9 805.4,297.6 806.1,298.1 816.5,302.2 817.4,302.4 818.2,302.2 818.8,301.6 823.8,293.5 823.9,292.8 823.6,292.1 822.9,291.6 812.6,287.5 811.7,287.4 810.9,287.6 810.3,288.1" fill="none" stroke="#f3f3f3" stroke-width="0.7" stroke-linejoin="round"/>
<polyline points="806.9,297.2 816.9,301.2" fill="none" stroke="#808080" stroke-width="1.3" stroke-linejoin="round" stroke-linecap="round"/>
<polygon points="812.1,296.6 819.0,297.7 820.8,292.5 814.0,291.2" fill="none" stroke="#808080" stroke-width="1.0" stroke-linejoin="round" stroke-linecap="round"/>
<polyline points="809.5,291.8 811.0,295.0" fill="none" stroke="#808080" stroke-width="1.0" stroke-linejoin="round" stroke-linecap="round"/>
<polygon points="807.3,295.0 810.0,295.5 810.4,293.4" fill="#808080" stroke="#808080" stroke-width="0.5" stroke-linejoin="round" stroke-linecap="round"/>
<polygon points="792.6,314.5 792.3,315.3 792.5,316.1 793.0,316.9 793.8,317.4 805.0,321.9 806.0,322.2 807.1,322.1 808.0,321.6 808.7,321.0 814.0,312.1 814.3,311.3 814.1,310.4 813.6,309.7 812.7,309.2 801.6,304.7 800.6,304.5 799.5,304.6 798.6,305.0 798.0,305.6" fill="#ececec" stroke="#808080" stroke-width="1.45" stroke-linejoin="round"/>
<polygon points="794.0,314.7 793.8,315.4 794.1,316.1 794.8,316.6 805.3,320.8 806.1,321.0 807.0,320.7 807.6,320.2 812.6,311.9 812.8,311.2 812.5,310.5 811.8,310.0 801.4,305.8 800.5,305.6 799.6,305.9 799.1,306.4" fill="none" stroke="#f3f3f3" stroke-width="0.7" stroke-linejoin="round"/>
<polygon points="798.8,309.3 810.0,313.8 811.6,311.1 800.4,306.6" fill="none" stroke="#808080" stroke-width="1.0" stroke-linejoin="round" stroke-linecap="round"/>
<polygon points="795.0,315.4 798.2,316.7 800.9,312.3 797.7,311.0" fill="none" stroke="#808080" stroke-width="1.0" stroke-linejoin="round" stroke-linecap="round"/>
<polygon points="802.0,315.0 807.8,317.3 808.9,315.5 803.1,313.2" fill="none" stroke="#808080" stroke-width="0.8" stroke-linejoin="round" stroke-linecap="round"/>
<polygon points="800.4,317.6 806.2,320.0 807.1,318.5 801.2,316.2" fill="none" stroke="#808080" stroke-width="0.8" stroke-linejoin="round" stroke-linecap="round"/>
<polygon points="781.0,333.3 780.8,334.1 780.9,335.0 781.4,335.7 782.3,336.3 793.5,340.9 794.6,341.1 795.6,341.0 796.6,340.6 797.2,339.9 802.7,330.9 802.9,330.0 802.8,329.2 802.3,328.4 801.4,327.9 790.2,323.3 789.2,323.1 788.1,323.2 787.2,323.6 786.5,324.3" fill="#ececec" stroke="#c4c4c4" stroke-width="1.45" stroke-linejoin="round"/>
<polygon points="782.4,333.5 782.3,334.2 782.5,334.9 783.2,335.4 793.8,339.8 794.7,339.9 795.5,339.7 796.1,339.1 801.3,330.6 801.4,329.9 801.2,329.2 800.5,328.7 789.9,324.4 789.1,324.3 788.2,324.5 787.6,325.1" fill="none" stroke="#f3f3f3" stroke-width="0.7" stroke-linejoin="round"/>
<polygon points="785.5,334.4 793.4,337.7 796.3,332.8 788.5,329.6" fill="#12a84a" stroke="#12a84a" stroke-width="0.8" stroke-linejoin="round" stroke-linecap="round"/>
<polyline points="790.3,330.3 791.3,328.6 792.9,328.1 795.1,329.0 795.6,330.3 794.5,332.0" fill="none" stroke="#12a84a" stroke-width="1.3" stroke-linejoin="round" stroke-linecap="round"/>
<polygon points="769.3,352.4 769.0,353.3 769.1,354.2 769.6,355.0 770.5,355.5 781.8,360.2 782.9,360.5 783.9,360.4 784.9,359.9 785.6,359.2 791.1,350.0 791.4,349.2 791.3,348.3 790.7,347.5 789.9,347.0 778.6,342.3 777.5,342.1 776.5,342.2 775.5,342.6 774.9,343.3" fill="#ececec" stroke="#808080" stroke-width="1.45" stroke-linejoin="round"/>
<polygon points="770.7,352.7 770.5,353.4 770.8,354.1 771.5,354.6 782.1,359.1 783.0,359.2 783.9,359.0 784.5,358.4 789.7,349.8 789.9,349.0 789.6,348.3 788.9,347.8 778.3,343.4 777.4,343.3 776.5,343.5 775.9,344.1" fill="none" stroke="#f3f3f3" stroke-width="0.7" stroke-linejoin="round"/>
<polygon points="786.1,353.7 785.6,348.3 779.8,345.9 774.3,348.8 774.7,354.2 780.6,356.6" fill="none" stroke="#808080" stroke-width="1.0" stroke-linejoin="round" stroke-linecap="round"/>
<polygon points="782.8,352.3 783.1,351.1 782.6,349.9 781.5,349.1 780.0,348.9 778.6,349.2 777.6,350.1 777.3,351.3 777.8,352.5 778.9,353.3 780.4,353.6 781.8,353.2" fill="none" stroke="#808080" stroke-width="1.0" stroke-linejoin="round" stroke-linecap="round"/>
<polygon points="1175.7,422.6 1175.6,423.6 1175.9,424.5 1176.7,425.4 1177.7,426.0 1190.6,431.1 1191.8,431.3 1192.9,431.2 1193.8,430.7 1194.3,430.0 1198.1,420.0 1198.2,419.1 1197.9,418.2 1197.2,417.3 1196.1,416.8 1183.3,411.7 1182.2,411.5 1181.1,411.6 1180.2,412.0 1179.6,412.8" fill="#ececec" stroke="#808080" stroke-width="1.45" stroke-linejoin="round"/>
<polygon points="1177.3,422.9 1177.2,423.7 1177.7,424.5 1178.5,425.0 1190.6,429.8 1191.6,430.0 1192.5,429.7 1193.0,429.1 1196.6,419.8 1196.6,419.0 1196.2,418.2 1195.3,417.7 1183.3,412.9 1182.3,412.8 1181.4,413.0 1180.9,413.6" fill="none" stroke="#f3f3f3" stroke-width="0.7" stroke-linejoin="round"/>
<polyline points="1180.2,423.3 1193.6,419.4" fill="none" stroke="#808080" stroke-width="1.2" stroke-linejoin="round" stroke-linecap="round"/>
<polyline points="1183.3,415.4 1190.5,427.4" fill="none" stroke="#808080" stroke-width="1.2" stroke-linejoin="round" stroke-linecap="round"/>
<polygon points="1167.4,443.8 1167.2,444.7 1167.6,445.7 1168.3,446.5 1169.3,447.1 1182.3,452.4 1183.5,452.6 1184.6,452.5 1185.5,452.0 1186.1,451.3 1190.0,441.1 1190.1,440.2 1189.8,439.2 1189.0,438.3 1188.0,437.7 1175.1,432.6 1173.9,432.3 1172.8,432.4 1171.9,432.9 1171.4,433.7" fill="#ececec" stroke="#808080" stroke-width="1.45" stroke-linejoin="round"/>
<polygon points="1168.9,444.0 1168.9,444.8 1169.3,445.6 1170.2,446.2 1182.4,451.1 1183.4,451.2 1184.2,451.0 1184.8,450.4 1188.5,440.8 1188.5,440.0 1188.0,439.2 1187.2,438.7 1175.0,433.9 1174.0,433.7 1173.2,433.9 1172.7,434.5" fill="none" stroke="#f3f3f3" stroke-width="0.7" stroke-linejoin="round"/>
<polyline points="1170.9,445.2 1182.6,449.8" fill="none" stroke="#808080" stroke-width="1.3" stroke-linejoin="round" stroke-linecap="round"/>
<polygon points="1176.4,444.4 1184.1,445.8 1185.0,439.7 1177.4,438.2" fill="none" stroke="#808080" stroke-width="1.0" stroke-linejoin="round" stroke-linecap="round"/>
<polyline points="1172.6,438.8 1174.8,442.6" fill="none" stroke="#808080" stroke-width="1.0" stroke-linejoin="round" stroke-linecap="round"/>
<polygon points="1170.8,442.6 1173.9,443.2 1173.9,440.8" fill="#808080" stroke="#808080" stroke-width="0.5" stroke-linejoin="round" stroke-linecap="round"/>
<polygon points="1158.8,465.3 1158.7,466.3 1159.0,467.3 1159.8,468.1 1160.8,468.7 1173.9,474.1 1175.1,474.4 1176.2,474.2 1177.2,473.8 1177.7,473.0 1181.7,462.6 1181.8,461.6 1181.5,460.7 1180.7,459.8 1179.7,459.2 1166.7,453.9 1165.5,453.6 1164.4,453.8 1163.5,454.2 1162.9,455.0" fill="#ececec" stroke="#808080" stroke-width="1.45" stroke-linejoin="round"/>
<polygon points="1160.4,465.6 1160.3,466.4 1160.8,467.2 1161.6,467.8 1174.0,472.8 1175.0,473.0 1175.9,472.7 1176.4,472.1 1180.2,462.3 1180.2,461.5 1179.7,460.7 1178.9,460.1 1166.6,455.2 1165.6,455.0 1164.7,455.3 1164.2,455.9" fill="none" stroke="#f3f3f3" stroke-width="0.7" stroke-linejoin="round"/>
<polygon points="1164.5,459.2 1177.6,464.5 1178.8,461.4 1165.8,456.2" fill="none" stroke="#808080" stroke-width="1.0" stroke-linejoin="round" stroke-linecap="round"/>
<polygon points="1161.7,466.5 1165.4,468.0 1167.4,462.8 1163.7,461.3" fill="none" stroke="#808080" stroke-width="1.0" stroke-linejoin="round" stroke-linecap="round"/>
<polygon points="1169.2,465.9 1176.0,468.7 1176.8,466.6 1170.0,463.8" fill="none" stroke="#808080" stroke-width="0.8" stroke-linejoin="round" stroke-linecap="round"/>
<polygon points="1168.0,469.0 1174.8,471.8 1175.5,470.1 1168.6,467.4" fill="none" stroke="#808080" stroke-width="0.8" stroke-linejoin="round" stroke-linecap="round"/>
<polygon points="1150.1,487.3 1150.0,488.3 1150.3,489.3 1151.0,490.2 1152.1,490.8 1165.3,496.3 1166.5,496.6 1167.7,496.4 1168.6,495.9 1169.2,495.1 1173.2,484.5 1173.4,483.6 1173.0,482.6 1172.3,481.7 1171.2,481.0 1158.1,475.7 1156.9,475.4 1155.8,475.5 1154.8,476.0 1154.3,476.8" fill="#ececec" stroke="#c4c4c4" stroke-width="1.45" stroke-linejoin="round"/>
<polygon points="1151.7,487.6 1151.6,488.4 1152.1,489.2 1152.9,489.8 1165.4,494.9 1166.4,495.1 1167.3,494.9 1167.8,494.2 1171.7,484.3 1171.7,483.4 1171.2,482.6 1170.4,482.0 1158.0,477.0 1157.0,476.8 1156.1,477.1 1155.6,477.7" fill="none" stroke="#f3f3f3" stroke-width="0.7" stroke-linejoin="round"/>
<polygon points="1155.2,488.7 1164.5,492.5 1166.7,486.8 1157.5,483.0" fill="#12a84a" stroke="#12a84a" stroke-width="0.8" stroke-linejoin="round" stroke-linecap="round"/>
<polyline points="1159.6,483.8 1160.4,481.8 1162.0,481.3 1164.6,482.4 1165.4,483.9 1164.6,485.9" fill="none" stroke="#12a84a" stroke-width="1.3" stroke-linejoin="round" stroke-linecap="round"/>
<polygon points="1141.2,509.8 1141.1,510.8 1141.4,511.8 1142.1,512.7 1143.2,513.4 1156.6,518.9 1157.8,519.2 1158.9,519.1 1159.8,518.6 1160.4,517.8 1164.6,507.0 1164.7,506.0 1164.4,504.9 1163.6,504.0 1162.6,503.4 1149.3,497.9 1148.1,497.6 1147.0,497.7 1146.0,498.2 1145.5,499.0" fill="#ececec" stroke="#808080" stroke-width="1.45" stroke-linejoin="round"/>
<polygon points="1142.8,510.0 1142.7,510.9 1143.2,511.7 1144.1,512.3 1156.6,517.6 1157.6,517.8 1158.5,517.5 1159.1,516.8 1163.0,506.7 1163.0,505.8 1162.6,505.0 1161.7,504.4 1149.2,499.2 1148.2,499.0 1147.3,499.3 1146.8,500.0" fill="none" stroke="#f3f3f3" stroke-width="0.7" stroke-linejoin="round"/>
<polygon points="1159.8,511.2 1158.3,504.9 1151.3,502.1 1146.0,505.5 1147.5,511.8 1154.5,514.7" fill="none" stroke="#808080" stroke-width="1.0" stroke-linejoin="round" stroke-linecap="round"/>
<polygon points="1156.0,509.6 1156.0,508.2 1155.3,506.8 1153.9,505.9 1152.2,505.6 1150.7,506.0 1149.8,507.1 1149.8,508.5 1150.5,509.9 1151.9,510.8 1153.6,511.1 1155.1,510.7" fill="none" stroke="#808080" stroke-width="1.0" stroke-linejoin="round" stroke-linecap="round"/>
<polygon points="628.7,581.6 628.3,582.7 628.3,583.8 628.9,584.8 629.8,585.5 642.0,591.4 643.2,591.7 644.4,591.6 645.5,591.0 646.2,590.2 653.2,578.7 653.5,577.6 653.5,576.5 652.9,575.6 652.0,574.9 639.8,569.1 638.7,568.8 637.5,568.9 636.4,569.4 635.6,570.3" fill="#ececec" stroke="#505050" stroke-width="1.45" stroke-linejoin="round"/>
<polygon points="630.2,581.9 629.9,582.9 630.2,583.7 630.9,584.4 642.4,589.9 643.4,590.1 644.4,589.9 645.1,589.2 651.6,578.4 651.9,577.5 651.6,576.6 650.9,576.0 639.4,570.5 638.5,570.3 637.5,570.6 636.8,571.2" fill="none" stroke="#f3f3f3" stroke-width="0.7" stroke-linejoin="round"/>
<polyline points="633.3,582.4 648.6,578.0" fill="none" stroke="#505050" stroke-width="1.2" stroke-linejoin="round" stroke-linecap="round"/>
<polyline points="638.8,573.3 643.0,587.1" fill="none" stroke="#505050" stroke-width="1.2" stroke-linejoin="round" stroke-linecap="round"/>
<polygon points="613.7,606.0 613.3,607.1 613.4,608.2 613.9,609.2 614.8,609.9 627.1,615.9 628.3,616.3 629.5,616.1 630.6,615.6 631.4,614.7 638.5,603.0 638.9,601.9 638.8,600.8 638.3,599.8 637.4,599.1 625.1,593.1 623.9,592.8 622.7,592.9 621.6,593.5 620.8,594.3" fill="#ececec" stroke="#505050" stroke-width="1.45" stroke-linejoin="round"/>
<polygon points="615.3,606.3 615.0,607.2 615.3,608.1 616.0,608.8 627.6,614.5 628.6,614.7 629.6,614.4 630.3,613.7 636.9,602.7 637.2,601.7 636.9,600.8 636.2,600.2 624.7,594.6 623.7,594.4 622.7,594.7 622.0,595.4" fill="none" stroke="#f3f3f3" stroke-width="0.7" stroke-linejoin="round"/>
<polyline points="617.0,607.6 628.1,613.1" fill="none" stroke="#505050" stroke-width="1.3" stroke-linejoin="round" stroke-linecap="round"/>
<polygon points="623.1,606.8 630.9,608.4 633.6,601.3 625.9,599.5" fill="none" stroke="#505050" stroke-width="1.0" stroke-linejoin="round" stroke-linecap="round"/>
<polyline points="620.7,600.3 622.0,604.7" fill="none" stroke="#505050" stroke-width="1.0" stroke-linejoin="round" stroke-linecap="round"/>
<polygon points="617.7,604.6 620.8,605.4 621.6,602.5" fill="#505050" stroke="#505050" stroke-width="0.5" stroke-linejoin="round" stroke-linecap="round"/>
<polygon points="598.4,630.9 598.0,632.0 598.1,633.1 598.6,634.1 599.5,634.8 611.9,641.1 613.1,641.4 614.4,641.2 615.5,640.7 616.3,639.8 623.5,627.8 623.9,626.7 623.8,625.5 623.3,624.5 622.4,623.8 610.0,617.7 608.9,617.4 607.7,617.5 606.5,618.1 605.7,619.0" fill="#ececec" stroke="#505050" stroke-width="1.45" stroke-linejoin="round"/>
<polygon points="600.0,631.2 599.7,632.1 600.0,633.1 600.7,633.7 612.4,639.5 613.4,639.8 614.4,639.5 615.1,638.7 621.9,627.5 622.2,626.5 622.0,625.6 621.2,624.9 609.6,619.2 608.6,619.0 607.6,619.3 606.9,620.0" fill="none" stroke="#f3f3f3" stroke-width="0.7" stroke-linejoin="round"/>
<polygon points="606.3,623.9 618.6,630.0 620.8,626.4 608.4,620.3" fill="none" stroke="#505050" stroke-width="1.0" stroke-linejoin="round" stroke-linecap="round"/>
<polygon points="601.1,632.2 604.6,633.9 608.3,628.0 604.8,626.2" fill="none" stroke="#505050" stroke-width="1.0" stroke-linejoin="round" stroke-linecap="round"/>
<polygon points="609.3,631.6 615.7,634.8 617.2,632.4 610.7,629.2" fill="none" stroke="#505050" stroke-width="0.8" stroke-linejoin="round" stroke-linecap="round"/>
<polygon points="607.1,635.2 613.6,638.4 614.7,636.5 608.3,633.3" fill="none" stroke="#505050" stroke-width="0.8" stroke-linejoin="round" stroke-linecap="round"/>
<polygon points="582.8,656.3 582.4,657.4 582.4,658.6 583.0,659.6 583.9,660.4 596.4,666.7 597.6,667.1 598.8,666.9 600.0,666.3 600.8,665.4 608.2,653.2 608.6,652.0 608.5,650.9 608.0,649.8 607.1,649.1 594.6,642.8 593.5,642.5 592.2,642.7 591.1,643.2 590.3,644.1" fill="#ececec" stroke="#505050" stroke-width="1.45" stroke-linejoin="round"/>
<polygon points="584.4,656.6 584.1,657.6 584.4,658.5 585.1,659.2 596.9,665.2 597.9,665.4 598.9,665.1 599.7,664.3 606.6,652.8 606.9,651.9 606.6,650.9 605.9,650.3 594.2,644.4 593.2,644.2 592.2,644.5 591.4,645.2" fill="none" stroke="#f3f3f3" stroke-width="0.7" stroke-linejoin="round"/>
<polygon points="587.3,657.0 595.8,661.3 599.2,655.6 590.7,651.4" fill="#505050" stroke="#505050" stroke-width="0.8" stroke-linejoin="round" stroke-linecap="round"/>
<polyline points="595.2,653.6 596.8,650.9 598.8,650.3 601.3,651.6 602.1,653.6 601.2,655.0" fill="none" stroke="#505050" stroke-width="1.2" stroke-linejoin="round" stroke-linecap="round"/>
<polygon points="566.8,682.3 566.4,683.5 566.5,684.7 567.0,685.7 567.9,686.5 580.5,693.0 581.7,693.3 583.0,693.2 584.1,692.6 585.0,691.6 592.5,679.1 593.0,678.0 592.9,676.8 592.4,675.7 591.4,675.0 578.9,668.6 577.7,668.2 576.5,668.4 575.3,668.9 574.5,669.9" fill="#ececec" stroke="#505050" stroke-width="1.45" stroke-linejoin="round"/>
<polygon points="568.5,682.6 568.1,683.6 568.4,684.6 569.1,685.3 581.0,691.4 582.0,691.6 583.0,691.3 583.8,690.5 590.9,678.8 591.2,677.8 591.0,676.8 590.2,676.1 578.4,670.1 577.4,669.9 576.4,670.2 575.6,670.9" fill="none" stroke="#f3f3f3" stroke-width="0.7" stroke-linejoin="round"/>
<polygon points="586.2,684.1 586.4,676.8 579.9,673.4 573.2,677.4 573.0,684.7 579.5,688.0" fill="none" stroke="#505050" stroke-width="1.0" stroke-linejoin="round" stroke-linecap="round"/>
<polygon points="582.6,682.2 583.1,680.6 582.7,679.0 581.4,677.8 579.8,677.5 578.1,678.0 576.8,679.2 576.3,680.9 576.7,682.4 577.9,683.6 579.6,683.9 581.3,683.4" fill="none" stroke="#505050" stroke-width="1.0" stroke-linejoin="round" stroke-linecap="round"/>
<text transform="matrix(1.1916,0.5482,-0.6499,1.0664,685.20,505.69)" font-family="'Liberation Sans',sans-serif" font-size="12.5" font-weight="bold" fill="#12a84a" text-anchor="middle" >01</text>
<text transform="matrix(1.4229,0.6549,-0.4949,1.2651,1081.89,689.09)" font-family="'Liberation Sans',sans-serif" font-size="12.5" font-weight="bold" fill="#12a84a" text-anchor="middle" >02</text>
<text transform="matrix(1.3293,0.7744,-0.9057,1.4861,449.07,893.14)" font-family="'Liberation Sans',sans-serif" font-size="12.5" font-weight="bold" fill="#12a84a" text-anchor="middle" >03</text>
<polyline points="578.1,154.4 570.1,151.7 580.8,148.4 582.4,150.0 575.4,152.2" fill="none" stroke="#3cc97c" stroke-width="1.35" stroke-linejoin="round" stroke-linecap="round"/>
<polyline points="897.2,281.1 888.5,277.4 898.0,273.3 899.6,274.9 893.3,277.6" fill="none" stroke="#3cc97c" stroke-width="1.35" stroke-linejoin="round" stroke-linecap="round"/>
<polyline points="370.5,417.7 361.4,414.0 374.8,409.0 376.4,410.6 367.8,413.8" fill="none" stroke="#3cc97c" stroke-width="1.35" stroke-linejoin="round" stroke-linecap="round"/>
<rect x="260" y="0" width="1022" height="50" fill="#fafafa"/>
<path d="M265.5 18H287.5V38.7H265.5ZM265.5 18L276 8.3H296V26M287.5 18L296 8.3" fill="none" stroke="#3a3a3a" stroke-width="1.15" stroke-linejoin="round" stroke-linecap="round"/><path d="M265.5 17.8H287.5" fill="none" stroke="#3a3a3a" stroke-width="1.9" stroke-linejoin="round" stroke-linecap="round"/>
<circle cx="295.8" cy="31.4" r="7" fill="#fafafa" stroke="#3a3a3a" stroke-width="1.0"/><path d="M291.3 31.4H300.3M295.8 26.9V35.9" fill="none" stroke="#3a3a3a" stroke-width="1.05" stroke-linejoin="round" stroke-linecap="round"/>
<path d="M311.4 9.4V37.4M317.3 9.4V37.4M323.2 9.4V37.4M329.0 9.4V37.4M334.9 9.4V37.4M340.8 9.4V37.4M311.4 9.4H340.8M311.4 15.0H340.8M311.4 20.6H340.8M311.4 26.2H340.8M311.4 31.8H340.8M311.4 37.4H340.8" fill="none" stroke="#3a3a3a" stroke-width="1.0" stroke-linejoin="round" stroke-linecap="round"/>
<circle cx="337.8" cy="33.4" r="7" fill="#fafafa" stroke="#3a3a3a" stroke-width="1.0"/><path d="M333.3 33.4H342.3M337.8 28.9V37.9" fill="none" stroke="#3a3a3a" stroke-width="1.05" stroke-linejoin="round" stroke-linecap="round"/>
<path d="M372.2 9.4L389.6 14L384.9 32L366.9 26.7Z" fill="none" stroke="#3a3a3a" stroke-width="1.05" stroke-linejoin="round" stroke-linecap="round"/>
<path d="M356.2 26.7L362.9 28.7L358.6 34Z" fill="none" stroke="#3a3a3a" stroke-width="1.1" stroke-linejoin="round" stroke-linecap="round"/>
<path d="M360.6 27.4L365.5 23.2" fill="none" stroke="#3a3a3a" stroke-width="1.1" stroke-linejoin="round" stroke-linecap="round" stroke-dasharray="2 1.2"/>
<rect x="358.9" y="37.1" width="30.1" height="2.9" rx="1.4" fill="none" stroke="#3a3a3a" stroke-width="1.0" stroke-linejoin="round" stroke-linecap="round"/>
<text x="355.2" y="19.2" font-family="'Liberation Sans',sans-serif" font-weight="bold" font-size="5.3" fill="#3a3a3a" textLength="13" lengthAdjust="spacingAndGlyphs">AUTO</text>
<rect x="400.3" y="9.1" width="31.4" height="31.2" fill="none" stroke="#3a3a3a" stroke-width="1.25" stroke-linejoin="round" stroke-linecap="round"/><rect x="404.5" y="12" width="24.8" height="8.7" fill="none" stroke="#3a3a3a" stroke-width="1.0" stroke-linejoin="round" stroke-linecap="round"/><rect x="404.5" y="23.8" width="7" height="12.6" fill="none" stroke="#3a3a3a" stroke-width="1.0" stroke-linejoin="round" stroke-linecap="round"/><rect x="413.8" y="23.8" width="15.5" height="5" fill="none" stroke="#3a3a3a" stroke-width="1.0" stroke-linejoin="round" stroke-linecap="round"/><rect x="413.8" y="31.6" width="15.5" height="5" fill="none" stroke="#3a3a3a" stroke-width="1.0" stroke-linejoin="round" stroke-linecap="round"/>
<path d="M446.7 13H474.7" fill="none" stroke="#cdcdcd" stroke-width="1.6" stroke-linejoin="round" stroke-linecap="round"/><rect x="446.7" y="16" width="28" height="2.7" fill="none" stroke="#cdcdcd" stroke-width="1" stroke-linejoin="round" stroke-linecap="round"/><rect x="446.7" y="21.1" width="28" height="3" fill="none" stroke="#cdcdcd" stroke-width="1" stroke-linejoin="round" stroke-linecap="round"/><rect x="446.7" y="26.5" width="28" height="4" fill="none" stroke="#cdcdcd" stroke-width="1" stroke-linejoin="round" stroke-linecap="round"/><rect x="446.7" y="33.4" width="28" height="5" fill="none" stroke="#cdcdcd" stroke-width="1" stroke-linejoin="round" stroke-linecap="round"/>
<rect x="492" y="9.4" width="1.6" height="30.8" fill="#9e9e9e"/><rect x="1220" y="9.4" width="1.6" height="30.8" fill="#9e9e9e"/>
<path d="M534.0 23.0L538.0 23.0L538.0 19.5L545.1 25.0L538.0 30.5L538.0 27.0L534.0 27.0ZM530.5 30.5L530.5 34.5L534.0 34.5L528.5 41.6L523.0 34.5L526.5 34.5L526.5 30.5ZM523.0 27.0L519.0 27.0L519.0 30.5L511.9 25.0L519.0 19.5L519.0 23.0L523.0 23.0ZM526.5 19.5L526.5 15.5L523.0 15.5L528.5 8.4L534.0 15.5L530.5 15.5L530.5 19.5Z" fill="none" stroke="#cdcdcd" stroke-width="1.0" stroke-linejoin="round" stroke-linecap="round"/><rect x="526.5" y="23" width="4" height="4" fill="none" stroke="#cdcdcd" stroke-width="1.0" stroke-linejoin="round" stroke-linecap="round"/>
<path d="M572.3 17.6L584.1 29.4L572.3 41.2L560.5 29.4Z" fill="none" stroke="#cdcdcd" stroke-width="1.1" stroke-linejoin="round" stroke-linecap="round"/><path d="M557.6 30A14.6 14.6 0 0 1 580 13.6" fill="none" stroke="#cdcdcd" stroke-width="1.1" stroke-linejoin="round" stroke-linecap="round"/><path d="M585.6 11.8L588.3 20.7L579 18Z" fill="none" stroke="#cdcdcd" stroke-width="1.1" stroke-linejoin="round" stroke-linecap="round"/>
<rect x="600.3" y="9.4" width="31.4" height="30.6" fill="none" stroke="#cdcdcd" stroke-width="1.0" stroke-linejoin="round" stroke-linecap="round" stroke-dasharray="2.5 2.5"/><rect x="600.3" y="23.4" width="17.4" height="16.6" fill="#fafafa" stroke="#cdcdcd" stroke-width="1.1"/><path d="M619.7 21.4L627.7 13.4M622.3 13.4H627.7V18.8" fill="none" stroke="#cdcdcd" stroke-width="1.2" stroke-linejoin="round" stroke-linecap="round"/>
<path d="M659.4 9.4L676.8 14L672.0999999999999 32L654.0999999999999 26.7Z" fill="none" stroke="#cdcdcd" stroke-width="1.05" stroke-linejoin="round" stroke-linecap="round"/>
<path d="M643.4 26.7L650.0999999999999 28.7L645.8 34Z" fill="none" stroke="#cdcdcd" stroke-width="1.1" stroke-linejoin="round" stroke-linecap="round"/>
<path d="M647.8 27.4L652.7 23.2" fill="none" stroke="#cdcdcd" stroke-width="1.1" stroke-linejoin="round" stroke-linecap="round" stroke-dasharray="2 1.2"/>
<rect x="646.0999999999999" y="37.1" width="30.1" height="2.9" rx="1.4" fill="none" stroke="#cdcdcd" stroke-width="1.0" stroke-linejoin="round" stroke-linecap="round"/>
<rect x="690.1" y="9.4" width="28.7" height="12.6" fill="none" stroke="#cdcdcd" stroke-width="1.1" stroke-linejoin="round" stroke-linecap="round"/><rect x="690.1" y="26.5" width="28.7" height="13.5" fill="none" stroke="#cdcdcd" stroke-width="1.1" stroke-linejoin="round" stroke-linecap="round"/><path d="M690.1 24.4H718.8" fill="none" stroke="#cdcdcd" stroke-width="1.0" stroke-linejoin="round" stroke-linecap="round" stroke-dasharray="1.2 1.6"/>
<defs><pattern id="hatch" width="2.4" height="2.4" patternUnits="userSpaceOnUse" patternTransform="rotate(-45)"><rect width="2.4" height="0.9" fill="#cdcdcd"/></pattern></defs>
<rect x="742.5" y="17.4" width="12.8" height="14.6" fill="url(#hatch)"/><rect x="732.2" y="17.4" width="23.1" height="22.9" fill="none" stroke="#cdcdcd" stroke-width="1.1" stroke-linejoin="round" stroke-linecap="round"/><rect x="742.5" y="9.1" width="23.1" height="22.9" fill="none" stroke="#cdcdcd" stroke-width="1.1" stroke-linejoin="round" stroke-linecap="round"/>
<rect x="780.3" y="30.5" width="29.4" height="9" fill="none" stroke="#cdcdcd" stroke-width="1.1" stroke-linejoin="round" stroke-linecap="round"/><path d="M787.6 30.5V23.4H802.3V30.5" fill="none" stroke="#cdcdcd" stroke-width="1.0" stroke-linejoin="round" stroke-linecap="round" stroke-dasharray="1.2 1.4"/><path d="M792.3 10.4L806 16.7L803 22L789.4 15.8Z" fill="none" stroke="#cdcdcd" stroke-width="1.1" stroke-linejoin="round" stroke-linecap="round"/><path d="M777.9 20.7L785.6 22.7L781 27.4Z" fill="none" stroke="#cdcdcd" stroke-width="1.0" stroke-linejoin="round" stroke-linecap="round"/><path d="M783.4 22L786.6 17.6" fill="none" stroke="#cdcdcd" stroke-width="1.0" stroke-linejoin="round" stroke-linecap="round" stroke-dasharray="1.5 1.2"/>
<path d="M837.4 9.4L849.4 24L834.7 39.8L820.4 24.7Z" fill="none" stroke="#cdcdcd" stroke-width="1.0" stroke-linejoin="round" stroke-linecap="round"/><path d="M821.5 23.8H849" fill="none" stroke="#cdcdcd" stroke-width="1.4" stroke-linejoin="round" stroke-linecap="round"/><path d="M824 8.7L834.7 20" fill="none" stroke="#cdcdcd" stroke-width="2.6" stroke-linejoin="round" stroke-linecap="round"/><path d="M849.8 27.4C847.5 32 845.2 34.5 845.2 37.2A4.6 4.6 0 0 0 854.4 37.2C854.4 34.5 852.1 32 849.8 27.4Z" fill="none" stroke="#cdcdcd" stroke-width="1.0" stroke-linejoin="round" stroke-linecap="round"/>
<text x="865.2" y="39.7" font-family="'Liberation Sans',sans-serif" font-weight="bold" font-size="43.6" fill="#fafafa" stroke="#3a3a3a" stroke-width="1.1" textLength="25" lengthAdjust="spacingAndGlyphs">T</text>
<text x="884.9" y="39.7" font-family="'Liberation Sans',sans-serif" font-weight="bold" font-size="25.4" fill="#fafafa" stroke="#3a3a3a" stroke-width="1.1" textLength="11.8" lengthAdjust="spacingAndGlyphs">a</text>
<rect x="911.5" y="22.7" width="10.7" height="17.1" fill="url(#hatch)"/><path d="M910.2 9.4H940.3V40H926.2V22H910.2Z" fill="none" stroke="#cdcdcd" stroke-width="1.0" stroke-linejoin="round" stroke-linecap="round"/><rect x="911.5" y="22.7" width="10.7" height="17.1" fill="none" stroke="#cdcdcd" stroke-width="0.8" stroke-linejoin="round" stroke-linecap="round"/>
<path d="M953.6 18.7H974.6V39.8H953.6ZM953.6 18.7L963 9.4H984.4V30L974.6 39.8M974.6 18.7L984.4 9.4" fill="none" stroke="#cdcdcd" stroke-width="1.0" stroke-linejoin="round" stroke-linecap="round"/><path d="M959.6 20L965.7 38.7" fill="none" stroke="#cdcdcd" stroke-width="1.0" stroke-linejoin="round" stroke-linecap="round" stroke-dasharray="1 1.6"/>
<circle cx="1002.5" cy="15" r="5" fill="url(#hatch)" stroke="#cdcdcd" stroke-width="0.9"/>
<circle cx="1022.3" cy="15" r="5" fill="url(#hatch)" stroke="#cdcdcd" stroke-width="0.9"/>
<circle cx="1002.5" cy="35" r="5" fill="url(#hatch)" stroke="#cdcdcd" stroke-width="0.9"/>
<circle cx="1022.3" cy="35" r="5" fill="url(#hatch)" stroke="#cdcdcd" stroke-width="0.9"/>
<rect x="1002.7" y="15.4" width="19.6" height="19.6" fill="#fafafa" stroke="#cdcdcd" stroke-width="1.1"/>
<path d="M1041.8 18.7H1063.5V40H1041.8ZM1041.8 18.7L1052.5 8.7H1073.1V30L1063.5 40M1063.5 18.7L1073.1 8.7" fill="none" stroke="#cdcdcd" stroke-width="1.0" stroke-linejoin="round" stroke-linecap="round"/><path d="M1041.8 23.2q2-1.6 4 0t4 0t4 0t4 0t4 0t1.7 0M1041.8 28q2-1.6 4 0t4 0t4 0t4 0t4 0t1.7 0M1041.8 32.8q2-1.6 4 0t4 0t4 0t4 0t4 0t1.7 0M1041.8 37q2-1.6 4 0t4 0t4 0t4 0t4 0t1.7 0M1063.5 24.2L1073.1 14.2M1063.5 29L1073.1 19M1063.5 33.8L1073.1 23.799999999999997M1063.5 38L1073.1 28" fill="none" stroke="#cdcdcd" stroke-width="0.9" stroke-linejoin="round" stroke-linecap="round"/>
<path d="M1085.5 8.3H1104L1108.2 12.5V36H1085.5Z" fill="none" stroke="#cdcdcd" stroke-width="1.0" stroke-linejoin="round" stroke-linecap="round"/>
<path d="M1091.5 13.4H1109.5L1114.5 18.4V41.4H1091.5Z" fill="#fafafa" stroke="#cdcdcd" stroke-width="1.0" stroke-linejoin="round"/>
<text x="1103.2" y="35.4" text-anchor="middle" font-family="'Liberation Sans',sans-serif" font-size="20.5" fill="#fafafa" stroke="#cdcdcd" stroke-width="0.9" textLength="10.5" lengthAdjust="spacingAndGlyphs">O</text>
<path d="M1129.5 8.3H1148L1152.2 12.5V36H1129.5Z" fill="none" stroke="#cdcdcd" stroke-width="1.0" stroke-linejoin="round" stroke-linecap="round"/>
<path d="M1135.5 13.4H1153.5L1158.5 18.4V41.4H1135.5Z" fill="#fafafa" stroke="#cdcdcd" stroke-width="1.0" stroke-linejoin="round"/>
<text x="1147.2" y="35.4" text-anchor="middle" font-family="'Liberation Sans',sans-serif" font-size="20.5" fill="#fafafa" stroke="#cdcdcd" stroke-width="0.9" textLength="11.5" lengthAdjust="spacingAndGlyphs">P</text>
<path d="M1196.5 9.1L1204.8 19.4L1182.1 40.7L1173 31.4Z" fill="none" stroke="#cdcdcd" stroke-width="1.0" stroke-linejoin="round" stroke-linecap="round"/><path d="M1175.6 28.9l2.0 2.5M1178.2 26.4l2.8 3.5M1180.8 24.0l2.0 2.5M1183.4 21.5l2.8 3.5M1186.1 19.0l2.0 2.5M1188.7 16.5l2.8 3.5M1191.3 14.1l2.0 2.5M1193.9 11.6l2.8 3.5" fill="none" stroke="#cdcdcd" stroke-width="0.9" stroke-linejoin="round" stroke-linecap="round"/>
<path d="M1240.2 15.4H1252.5V19.5a2.3 2.3 0 1 0 2 4.2V27.4M1240.2 15.4V40H1265.8V27.4H1262a2.3 2.3 0 1 1-4.4 0H1253.5M1253.5 27.4V31a2.3 2.3 0 1 1 0 4.5V40M1240.2 27.4H1244.5a2.3 2.3 0 1 0 4.4 0H1253.5" fill="none" stroke="#3a3a3a" stroke-width="1.2" stroke-linejoin="round" stroke-linecap="round"/>
<path d="M1264.5 7.2L1272.8 16L1264.3 24.3L1261.2 21a2.3 2.3 0 1 0-3.4-3.2L1255.6 15.2L1258.4 12.6a2.3 2.3 0 1 1 3.2-3Z" fill="none" stroke="#3a3a3a" stroke-width="1.2" stroke-linejoin="round" stroke-linecap="round"/>
<rect x="0" y="0" width="4" height="965" fill="#c9c9c9"/>
<rect x="4" y="0" width="20" height="20" fill="#eeeeee"/>
<path d="M11.2 6.6L8 10.2L11.2 13.8M16.8 6.6L20 10.2L16.8 13.8M14 5.8V14.6" fill="none" stroke="#555" stroke-width="1.1" stroke-linecap="round" stroke-linejoin="round"/>
<line x1="25.6" y1="928" x2="52" y2="883" stroke="#a6d2a6" stroke-width="3.4"/>
<polygon points="55.9,872.0 46.5,880.1 57.3,884.8" fill="#a6d2a6" />
<text x="59" y="868" font-family="'Liberation Sans',sans-serif" font-size="9" fill="#cfe3cf" transform="rotate(20 59 868)">Y</text>
<polygon points="53.9,847.8 111.1,874.1 86.2,918.5 27.6,892.9" fill="#cbcbcb" fill-opacity="0.93"/>
<polygon points="27.6,892.9 86.2,918.5 83.5,949.5 25.6,929.3" fill="#c6c6c6" fill-opacity="0.93"/>
<polygon points="111.1,874.1 110.5,905.1 83.5,949.5 86.2,918.5" fill="#c9c9c9" fill-opacity="0.93"/>
<line x1="25.6" y1="928" x2="52" y2="883" stroke="#9fd49f" stroke-width="3.4" opacity="0.45"/>
<polygon points="55.9,872.0 46.5,880.1 57.3,884.8" fill="#9fd49f" opacity="0.5"/>
<path d="M46.8,860.0L104.4,886.1M69.3,854.9L43.4,899.8M34.7,880.7L92.9,906.5M95.7,867.0L70.4,911.6" stroke="#d3d3d3" stroke-width="0.8" fill="none"/>
<text transform="matrix(0.93,0.36,-0.36,0.93,58.6,886.6)" font-family="'Liberation Sans',sans-serif" font-size="12.5" fill="#4c4c4c">Üst</text>
<text transform="matrix(0.92,0.42,-0.2,0.5,45.6,925.2)" font-family="'Liberation Sans',sans-serif" font-size="10.5" fill="#4c4c4c">Ön</text>
<text transform="matrix(0.36,-0.86,0.30,0.12,94.5,923)" font-family="'Liberation Sans',sans-serif" font-size="9" fill="#4c4c4c">Sağ</text>
<line x1="25.2" y1="929" x2="25.0" y2="902" stroke="#7a7fc6" stroke-width="3.8"/>
<polygon points="24.9,892.6 19.2,903.4 30.9,903.4" fill="#7a7fc6" />
<text x="21.2" y="891.6" font-family="'Liberation Sans',sans-serif" font-size="9.5" fill="#7a7fc6">Z</text>
<line x1="25.6" y1="929.6" x2="78" y2="952.4" stroke="#d27676" stroke-width="3.8"/>
<polygon points="87.6,956.4 80.6,946.4 74.2,957.0" fill="#d27676" />
<text x="95.2" y="964.4" font-family="'Liberation Sans',sans-serif" font-size="9.5" fill="#d27676">X</text>
<defs><radialGradient id="sh" cx="50%" cy="50%" r="50%"><stop offset="80%" stop-color="#000" stop-opacity="0.10"/><stop offset="100%" stop-color="#000" stop-opacity="0"/></radialGradient></defs>
<circle cx="158.7" cy="934.6" r="20.5" fill="url(#sh)"/>
<circle cx="158.7" cy="933.6" r="17.6" fill="#f9f9f9"/>
<path d="M152.2 924.2H150.6A1.6 1.6 0 0 0 149 925.8V928.4M165.2 924.2H166.8A1.6 1.6 0 0 1 168.4 925.8V928.4M152.2 943H150.6A1.6 1.6 0 0 1 149 941.4V938.8M165.2 943H166.8A1.6 1.6 0 0 0 168.4 941.4V938.8" fill="none" stroke="#4a4a4a" stroke-width="1.5" stroke-linecap="round"/>
<path d="M158.7 927.2L164.2 930.4V936.8L158.7 940L153.2 936.8V930.4ZM153.2 930.4L158.7 933.6L164.2 930.4M158.7 933.6V940" fill="none" stroke="#4a4a4a" stroke-width="1.4" stroke-linejoin="round"/>
</svg>
</body></html>
